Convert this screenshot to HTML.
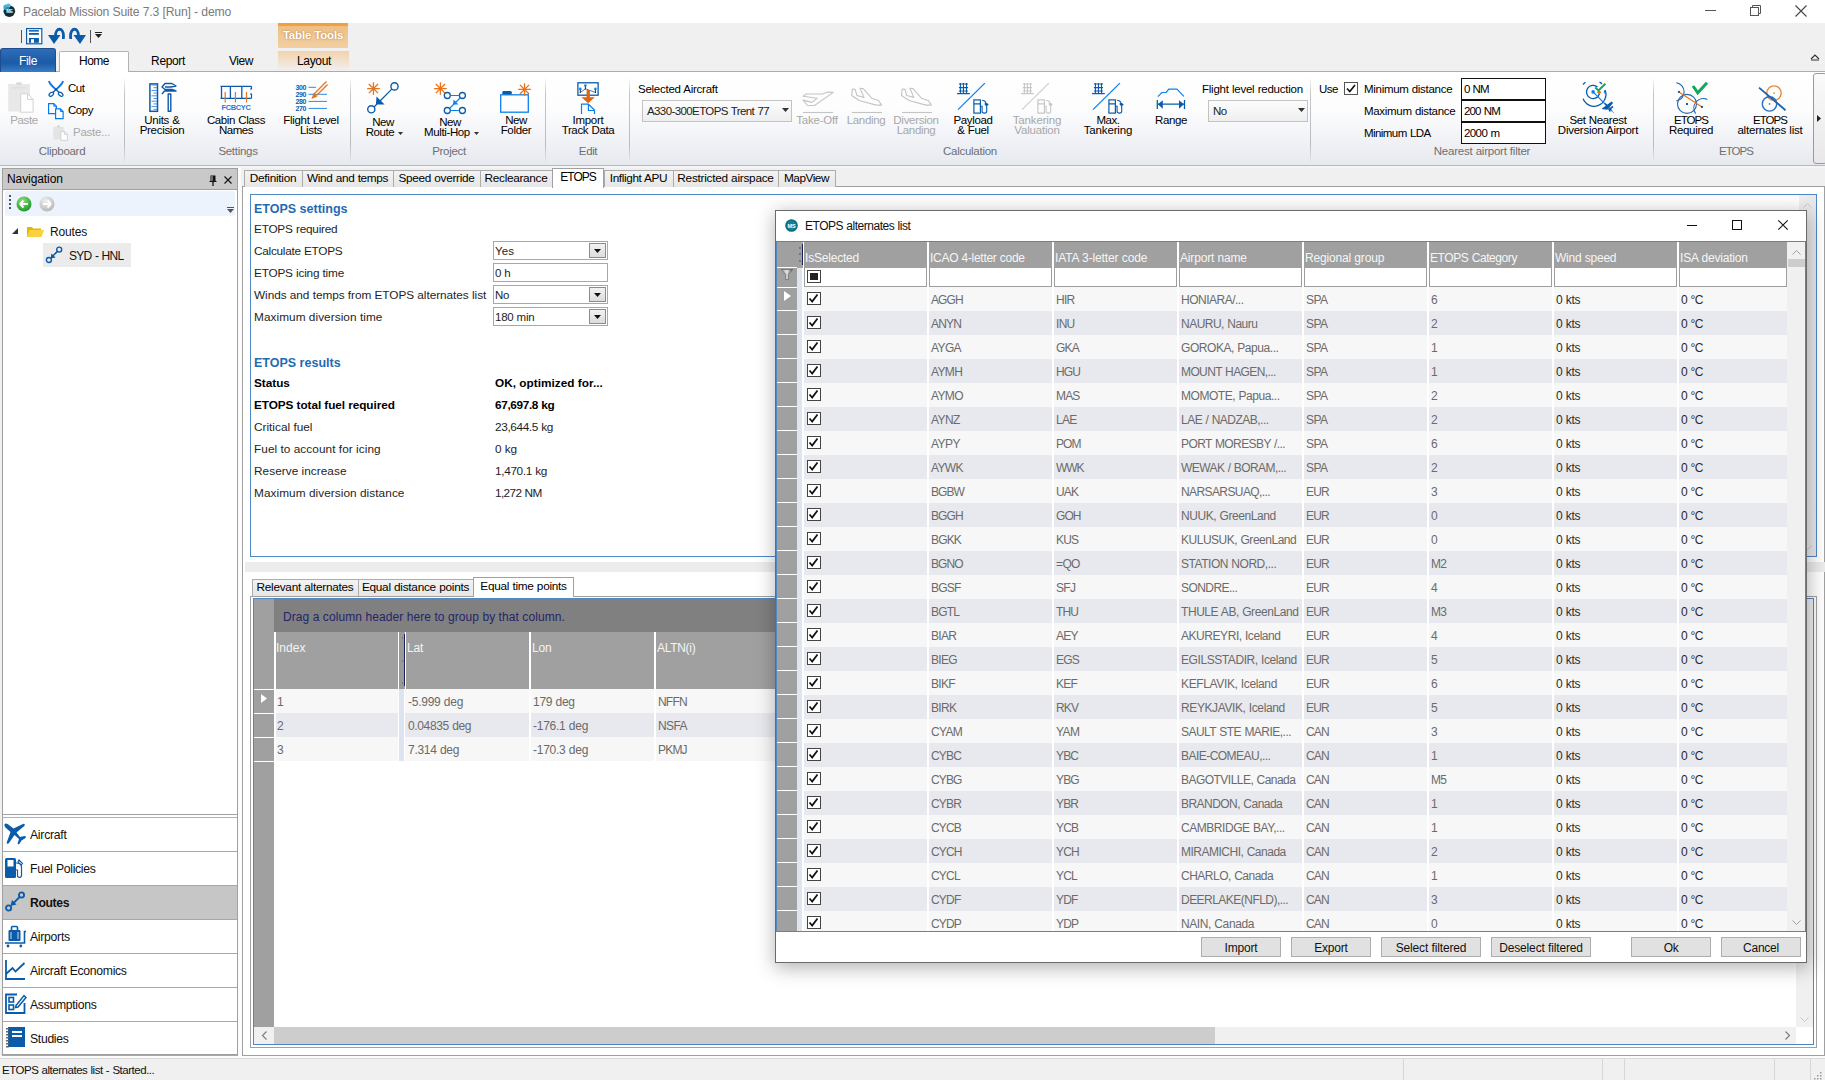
<!DOCTYPE html><html><head><meta charset="utf-8"><style>
*{margin:0;padding:0;box-sizing:border-box}
html,body{width:1825px;height:1080px;overflow:hidden;background:#f0f0f0;font-family:"Liberation Sans",sans-serif;font-size:12px;color:#000;position:relative}
.t{position:absolute;white-space:nowrap}
svg{position:absolute;overflow:visible}
</style></head><body><div style="position:absolute;left:0px;top:0px;width:1825px;height:23px;background:#fff"></div>
<svg style="left:2px;top:2px;" width="16" height="18" viewBox="0 0 16 18"><circle cx="7.3" cy="9.2" r="5.8" fill="#0f2f38"/><circle cx="4" cy="5.2" r="2.6" fill="#3fb0cc"/><circle cx="6.5" cy="3.6" r="2.2" fill="#4cc0d8"/><circle cx="5.5" cy="6.5" r="1.8" fill="#2a8fa8"/><text x="7.6" y="11.3" font-size="4.5" fill="#fff" text-anchor="middle" font-family="Liberation Sans" font-weight="bold">ME</text></svg>
<div class="t" style="left:23px;top:4.00px;font-size:12.2px;line-height:17px;color:#7a7a7a;letter-spacing:-0.186px;word-spacing:0.186px;">Pacelab Mission Suite 7.3 [Run] - demo</div>
<div style="position:absolute;left:1705px;top:10px;width:11px;height:1px;background:#555"></div>
<svg style="left:1750px;top:5px;" width="12" height="12" viewBox="0 0 12 12"><rect x="0.5" y="2.5" width="8" height="8" fill="none" stroke="#555"/><path d="M2.5 2.5V0.5H10.5V8.5H8.5" fill="none" stroke="#555"/></svg>
<svg style="left:1795px;top:5px;" width="12" height="12" viewBox="0 0 12 12"><path d="M0.5 0.5L11.5 11.5M11.5 0.5L0.5 11.5" stroke="#444" stroke-width="1.1"/></svg>
<div style="position:absolute;left:21px;top:30px;width:1px;height:13px;background:#555"></div>
<svg style="left:26px;top:28px;" width="17" height="17" viewBox="0 0 17 17"><rect x="0.6" y="0.6" width="15.2" height="15.2" fill="#fff" stroke="#0a5cab" stroke-width="1.2"/><rect x="2.9" y="2.1" width="10" height="1.5" fill="#0a5cab"/><rect x="2.9" y="5" width="10" height="1.8" fill="#0a5cab"/><rect x="2.9" y="10" width="10" height="4.8" fill="#0a5cab"/><rect x="5" y="11.2" width="3" height="3.6" fill="#fff"/></svg>
<svg style="left:48px;top:28px;" width="17" height="17" viewBox="0 0 17 17"><path d="M7.5 8 C7.5 -1, 15.5 -1, 15.5 8 L15.3 11" fill="none" stroke="#0a5cab" stroke-width="2.8"/><path d="M0 7 L12.5 7 L6 16 Z" fill="#0a5cab"/></svg>
<svg style="left:69px;top:28px;" width="17" height="17" viewBox="0 0 17 17"><path d="M9.5 8 C9.5 -1, 1.5 -1, 1.5 8 L1.7 11" fill="none" stroke="#0a5cab" stroke-width="2.8"/><path d="M17 7 L4.5 7 L11 16 Z" fill="#0a5cab"/></svg>
<div style="position:absolute;left:90px;top:30px;width:1px;height:13px;background:#555"></div>
<div style="position:absolute;left:95px;top:32px;width:7px;height:1px;background:#222"></div>
<svg style="left:95px;top:34px;" width="7" height="4" viewBox="0 0 7 4"><path d="M0 0H7L3.5 4Z" fill="#222"/></svg>
<div style="position:absolute;left:278px;top:23px;width:70px;height:25px;background:linear-gradient(#f4a03a 0,#f4a03a 3px,#eebf86 3px,#f2cfa2 100%)"></div>
<div class="t" style="left:278.0px;width:70px;text-align:center;top:27.00px;font-size:11.5px;line-height:16px;color:#fff;font-weight:bold;letter-spacing:-0.199px;word-spacing:0.199px;text-shadow:0 0 2px #b07030;">Table Tools</div>
<div style="position:absolute;left:0px;top:71px;width:1825px;height:1px;background:#a9adb5"></div>
<div style="position:absolute;left:0px;top:48px;width:56px;height:24px;background:linear-gradient(#2f6db8,#1b5aa6 60%,#3b7cc5);border-radius:3px 3px 0 0;border:1px solid #1d4f8f;border-bottom:none"></div>
<div class="t" style="left:0.0px;width:56px;text-align:center;top:53.00px;font-size:12px;line-height:17px;color:#fff;letter-spacing:-0.358px;word-spacing:0.358px;">File</div>
<div style="position:absolute;left:59px;top:51px;width:70px;height:21px;background:#fff;border:1px solid #b0b3b8;border-bottom:none;border-radius:2px 2px 0 0"></div>
<div class="t" style="left:59.0px;width:70px;text-align:center;top:53.00px;font-size:12px;line-height:17px;color:#000;letter-spacing:-0.515px;word-spacing:0.515px;">Home</div>
<div class="t" style="left:133.0px;width:70px;text-align:center;top:53.00px;font-size:12px;line-height:17px;color:#000;letter-spacing:-0.370px;word-spacing:0.370px;">Report</div>
<div class="t" style="left:206.0px;width:70px;text-align:center;top:53.00px;font-size:12px;line-height:17px;color:#000;letter-spacing:-0.386px;word-spacing:0.386px;">View</div>
<div style="position:absolute;left:278px;top:51px;width:71px;height:20px;background:linear-gradient(#f3d2aa,#f0f0f0)"></div>
<div class="t" style="left:279.0px;width:70px;text-align:center;top:53.00px;font-size:12px;line-height:17px;color:#000;letter-spacing:-0.340px;word-spacing:0.340px;">Layout</div>
<svg style="left:1810px;top:53px;" width="10" height="7" viewBox="0 0 10 7"><path d="M1 6 L5 2 L9 6" fill="none" stroke="#333" stroke-width="1.2"/><path d="M1 7 H9" stroke="#333"/></svg>
<div style="position:absolute;left:0px;top:72px;width:1825px;height:93px;background:linear-gradient(#ffffff 0%,#fdfdfe 40%,#e6e9ef 100%)"></div>
<div style="position:absolute;left:0px;top:165px;width:1825px;height:1px;background:#b6b9bf"></div>
<div style="position:absolute;left:124px;top:77px;width:1px;height:85px;background:linear-gradient(rgba(200,203,208,0),#c2c5ca 20%,#b8bbc0 80%,rgba(200,203,208,0.2))"></div>
<div style="position:absolute;left:350px;top:77px;width:1px;height:85px;background:linear-gradient(rgba(200,203,208,0),#c2c5ca 20%,#b8bbc0 80%,rgba(200,203,208,0.2))"></div>
<div style="position:absolute;left:545px;top:77px;width:1px;height:85px;background:linear-gradient(rgba(200,203,208,0),#c2c5ca 20%,#b8bbc0 80%,rgba(200,203,208,0.2))"></div>
<div style="position:absolute;left:629px;top:77px;width:1px;height:85px;background:linear-gradient(rgba(200,203,208,0),#c2c5ca 20%,#b8bbc0 80%,rgba(200,203,208,0.2))"></div>
<div style="position:absolute;left:1310px;top:77px;width:1px;height:85px;background:linear-gradient(rgba(200,203,208,0),#c2c5ca 20%,#b8bbc0 80%,rgba(200,203,208,0.2))"></div>
<div style="position:absolute;left:1653px;top:77px;width:1px;height:85px;background:linear-gradient(rgba(200,203,208,0),#c2c5ca 20%,#b8bbc0 80%,rgba(200,203,208,0.2))"></div>
<div class="t" style="left:-38.0px;width:200px;text-align:center;top:143.00px;font-size:11.5px;line-height:16px;color:#6d6f73;letter-spacing:-0.302px;word-spacing:0.302px;">Clipboard</div>
<div class="t" style="left:138.0px;width:200px;text-align:center;top:143.00px;font-size:11.5px;line-height:16px;color:#6d6f73;letter-spacing:-0.294px;word-spacing:0.294px;">Settings</div>
<div class="t" style="left:349.0px;width:200px;text-align:center;top:143.00px;font-size:11.5px;line-height:16px;color:#6d6f73;letter-spacing:-0.303px;word-spacing:0.303px;">Project</div>
<div class="t" style="left:488.0px;width:200px;text-align:center;top:143.00px;font-size:11.5px;line-height:16px;color:#6d6f73;letter-spacing:-0.371px;word-spacing:0.371px;">Edit</div>
<div class="t" style="left:870.0px;width:200px;text-align:center;top:143.00px;font-size:11.5px;line-height:16px;color:#6d6f73;letter-spacing:-0.275px;word-spacing:0.275px;">Calculation</div>
<div class="t" style="left:1382.0px;width:200px;text-align:center;top:143.00px;font-size:11.5px;line-height:16px;color:#6d6f73;letter-spacing:-0.227px;word-spacing:0.227px;">Nearest airport filter</div>
<div class="t" style="left:1636.0px;width:200px;text-align:center;top:143.00px;font-size:11.5px;line-height:16px;color:#6d6f73;letter-spacing:-0.972px;word-spacing:0.972px;">ETOPS</div>
<div style="position:absolute;left:1813px;top:73px;width:14px;height:91px;background:linear-gradient(#fafafa,#e8e8e8);border:1px solid #9a9a9a;border-radius:3px"></div>
<svg style="left:1817px;top:115px;" width="4" height="7" viewBox="0 0 4 7"><path d="M0 0L4 3.5L0 7Z" fill="#222"/></svg>
<svg style="left:8px;top:82px;" width="28" height="32" viewBox="0 0 28 32"><rect x="0.2" y="2" width="21.8" height="27.6" fill="#e8e8e8"/><rect x="8.2" y="0.3" width="5.5" height="2.5" fill="#dadada"/><path d="M4 5.8H18" stroke="#dcdcdc" stroke-width="1.2"/><path d="M12.7 11.8 H19.5 L25.1 17.4 V30.2 H12.7Z" fill="#fff" stroke="#d2d2d2" stroke-width="1"/><path d="M19.5 11.8 V17.4 H25.1" fill="none" stroke="#d2d2d2" stroke-width="1"/></svg>
<div class="t" style="left:-6.0px;width:60px;text-align:center;top:112.00px;font-size:11.5px;line-height:16px;color:#a8a8a8;letter-spacing:-0.373px;word-spacing:0.373px;">Paste</div>
<svg style="left:48px;top:80px;" width="17" height="17" viewBox="0 0 17 17"><path d="M1 1 C1.5 4 4 6 8 9.5 M15 1 C14.5 4 12 6 8 9.5" fill="none" stroke="#0a78e6" stroke-width="1.8"/><path d="M8 9.5 L5 12.5 M8 9.5 L11 12.5" stroke="#0a5cab" stroke-width="1.3"/><ellipse cx="3.3" cy="14.3" rx="2.6" ry="1.6" transform="rotate(-40 3.3 14.3)" fill="none" stroke="#0a5cab" stroke-width="1.2"/><ellipse cx="12.7" cy="14.3" rx="2.6" ry="1.6" transform="rotate(40 12.7 14.3)" fill="none" stroke="#0a5cab" stroke-width="1.2"/><circle cx="8" cy="9.3" r="1.2" fill="#0a5cab"/></svg>
<div class="t" style="left:68px;top:80.00px;font-size:11.5px;line-height:16px;color:#000;letter-spacing:-0.488px;word-spacing:0.488px;">Cut</div>
<svg style="left:48px;top:103px;" width="17" height="17" viewBox="0 0 17 17"><path d="M0.6 0.6H5.8L8.4 3.2V10.6H0.6Z" fill="#fff" stroke="#0a78e6" stroke-width="1.2"/><path d="M5.8 0.6V3.2H8.4" fill="none" stroke="#0a78e6" stroke-width="1"/><path d="M7.6 5.8H12.4L15.1 8.5V15.6H7.6Z" fill="#fff" stroke="#0a78e6" stroke-width="1.2"/><path d="M12.4 5.8V8.5H15.1" fill="none" stroke="#0a78e6" stroke-width="1"/></svg>
<div class="t" style="left:68px;top:102.00px;font-size:11.5px;line-height:16px;color:#000;letter-spacing:-0.455px;word-spacing:0.455px;">Copy</div>
<svg style="left:53px;top:125px;" width="16" height="16" viewBox="0 0 16 16"><rect x="0.2" y="2" width="10.6" height="12.5" fill="#e4e4e4"/><rect x="4" y="0.4" width="3" height="2" fill="#d8d8d8"/><path d="M7.8 6.4 H11.4 L14.4 9.4 V15.4 H7.8Z" fill="#fff" stroke="#d0d0d0" stroke-width="1"/><path d="M11.4 6.4 V9.4 H14.4" fill="none" stroke="#d0d0d0" stroke-width="0.9"/></svg>
<div class="t" style="left:73px;top:124.00px;font-size:11.5px;line-height:16px;color:#a8a8a8;letter-spacing:-0.233px;word-spacing:0.233px;">Paste...</div>
<svg style="left:145px;top:78px;" width="36" height="36" viewBox="0 0 36 36"><rect x="4.9" y="5.9" width="7.6" height="27.4" fill="none" stroke="#0f5aa8" stroke-width="1.5"/><path d="M6.5 7.0 H12" stroke="#2f8ae0" stroke-width="0.9"/><path d="M8.5 9.7 H12" stroke="#2f8ae0" stroke-width="0.9"/><path d="M6.5 12.4 H12" stroke="#2f8ae0" stroke-width="0.9"/><path d="M8.5 15.1 H12" stroke="#2f8ae0" stroke-width="0.9"/><path d="M6.5 17.8 H12" stroke="#2f8ae0" stroke-width="0.9"/><path d="M8.5 20.5 H12" stroke="#2f8ae0" stroke-width="0.9"/><path d="M6.5 23.2 H12" stroke="#2f8ae0" stroke-width="0.9"/><path d="M8.5 25.9 H12" stroke="#2f8ae0" stroke-width="0.9"/><path d="M6.5 28.6 H12" stroke="#2f8ae0" stroke-width="0.9"/><path d="M8.5 31.3 H12" stroke="#2f8ae0" stroke-width="0.9"/><path d="M23.2 33.3 V16 H25.8 V33.3Z M17 16 L19.5 13 L31 13 L27 11.5 L20 11.5 L17 9 L20 5.5 L27 5.5 L31 8 L26 9 L20 9" fill="none" stroke="#0f5aa8" stroke-width="1.4" stroke-linejoin="round"/></svg>
<div class="t" style="left:122.0px;width:80px;text-align:center;top:112.00px;font-size:11.5px;line-height:16px;color:#000;letter-spacing:-0.299px;word-spacing:0.299px;">Units &amp;</div>
<div class="t" style="left:122.0px;width:80px;text-align:center;top:122.00px;font-size:11.5px;line-height:16px;color:#000;letter-spacing:-0.287px;word-spacing:0.287px;">Precision</div>
<svg style="left:218px;top:84px;" width="36" height="28" viewBox="0 0 36 28"><path d="M2.5 2.3 H33.5 M2.5 14.3 H33.5 M3.5 2.3 V14.3 M12.4 2.3 V14.3 M23.8 2.3 V14.3" fill="none" stroke="#0f5aa8" stroke-width="1.3"/><path d="M33.5 2.3 V5 H32 M33.5 14.3 V10 H32" fill="none" stroke="#0f5aa8" stroke-width="1.2"/><path d="M7.2 8 V18.5 M17.4 8 V18.5 M28.5 8 V18.5" stroke="#e8731a" stroke-width="1.2"/><text x="18" y="25.8" font-size="7.4" fill="#1e78d8" text-anchor="middle" font-family="Liberation Sans" font-weight="bold" letter-spacing="-0.3">FCBCYC</text></svg>
<div class="t" style="left:196.0px;width:80px;text-align:center;top:112.00px;font-size:11.5px;line-height:16px;color:#000;letter-spacing:-0.385px;word-spacing:0.385px;">Cabin Class</div>
<div class="t" style="left:196.0px;width:80px;text-align:center;top:122.00px;font-size:11.5px;line-height:16px;color:#000;letter-spacing:-0.441px;word-spacing:0.441px;">Names</div>
<svg style="left:294px;top:80px;" width="36" height="34" viewBox="0 0 36 34"><g font-family="Liberation Sans" font-weight="bold" font-size="7" fill="#0f5aa8" letter-spacing="-0.4"><text x="1.5" y="10">300</text><text x="1.5" y="17">290</text><text x="1.5" y="24">280</text><text x="1.5" y="31">270</text></g><path d="M14.5 7.3H22M14.5 14.3H33M14.5 21.4H33M14.5 28.4H33" stroke="#2f8ae0" stroke-width="1"/><path d="M20 14 L32.5 1.5 M22.5 15.5 L33.5 4.5" stroke="#e8731a" stroke-width="1.3" fill="none"/><path d="M17.5 19 L19.5 13 L23.5 16.5Z" fill="#e8731a"/></svg>
<div class="t" style="left:271.0px;width:80px;text-align:center;top:112.00px;font-size:11.5px;line-height:16px;color:#000;letter-spacing:-0.312px;word-spacing:0.312px;">Flight Level</div>
<div class="t" style="left:271.0px;width:80px;text-align:center;top:122.00px;font-size:11.5px;line-height:16px;color:#000;letter-spacing:-0.304px;word-spacing:0.304px;">Lists</div>
<svg style="left:362px;top:78px;" width="110" height="40" viewBox="0 0 110 40"><g transform="translate(0,0)"><path d="M5.1499999999999995 10.55H17.75M11.45 4.250000000000001V16.85M6.85 5.950000000000001L16.049999999999997 15.15M16.049999999999997 5.950000000000001L6.85 15.15" stroke="#e8731a" stroke-width="1.3"/><circle cx="32.5" cy="8.4" r="3.6" fill="none" stroke="#0a5cab" stroke-width="1.4"/><circle cx="9.3" cy="31.3" r="3.6" fill="none" stroke="#0a5cab" stroke-width="1.4"/><path d="M29.8 11.1 L18 23 M15 26 L12 29" stroke="#0a5cab" stroke-width="1.3"/><path d="M14.5 18.4 L22.6 26.5 L13.9 26.5Z" fill="#0a5cab"/></g><path d="M72.10000000000001 10.55H84.7M78.4 4.250000000000001V16.85M73.80000000000001 5.950000000000001L83.0 15.15M83.0 5.950000000000001L73.80000000000001 15.15" stroke="#e8731a" stroke-width="1.3"/><circle cx="85.3" cy="17.5" r="3" fill="none" stroke="#0a5cab" stroke-width="1.3"/><circle cx="100.4" cy="17.5" r="3" fill="none" stroke="#0a5cab" stroke-width="1.3"/><circle cx="85.3" cy="32.5" r="3" fill="none" stroke="#0a5cab" stroke-width="1.3"/><circle cx="100.4" cy="32.5" r="3" fill="none" stroke="#0a5cab" stroke-width="1.3"/><path d="M88.3 17.5H97.4M88.3 32.5H97.4M98.3 19.8 L88 30" stroke="#0a80f0" stroke-width="1.2"/><path d="M91.6 21.4 L96.4 26.5 L91 26.5Z" fill="#0a80f0"/></svg>
<div class="t" style="left:343.0px;width:80px;text-align:center;top:114.00px;font-size:11.5px;line-height:16px;color:#000;letter-spacing:-0.556px;word-spacing:0.556px;">New</div>
<div class="t" style="left:340.0px;width:80px;text-align:center;top:124.00px;font-size:11.5px;line-height:16px;color:#000;letter-spacing:-0.395px;word-spacing:0.395px;">Route</div>
<svg style="left:398px;top:132px;" width="5" height="3" viewBox="0 0 5 3"><path d="M0 0H5L2.5 3Z" fill="#333"/></svg>
<div class="t" style="left:410.0px;width:80px;text-align:center;top:114.00px;font-size:11.5px;line-height:16px;color:#000;letter-spacing:-0.556px;word-spacing:0.556px;">New</div>
<div class="t" style="left:402.0px;width:90px;text-align:center;top:124.00px;font-size:11.5px;line-height:16px;color:#000;letter-spacing:-0.381px;word-spacing:0.381px;">Multi-Hop</div>
<svg style="left:474px;top:132px;" width="5" height="3" viewBox="0 0 5 3"><path d="M0 0H5L2.5 3Z" fill="#333"/></svg>
<svg style="left:495px;top:78px;" width="110" height="40" viewBox="0 0 110 40"><rect x="5.7" y="16.8" width="27.6" height="17.4" fill="none" stroke="#0a80f0" stroke-width="1.3"/><rect x="7.2" y="13" width="9.7" height="3.6" rx="1.5" fill="#0a5cab"/><path d="M23.2 11.45H35.8M29.5 5.1499999999999995V17.75M24.9 6.85L34.1 16.049999999999997M34.1 6.85L24.9 16.049999999999997" stroke="#e8731a" stroke-width="1.3"/><rect x="82.9" y="4.8" width="20.2" height="12.4" fill="none" stroke="#0a5cab" stroke-width="1.3"/><path d="M85.3 14.5 L90.4 10.8 L100.4 14.5" fill="none" stroke="#1e6fc8" stroke-width="0.9"/><path d="M85.3 11 V15 M90.4 8 V11.5 M100.4 11 V15" stroke="#111" stroke-width="0.9"/><circle cx="90.4" cy="7.5" r="1.3" fill="#0a80f0"/><circle cx="85.3" cy="10.9" r="1.3" fill="#0a80f0"/><circle cx="100.4" cy="10.9" r="1.3" fill="#0a80f0"/><path d="M91.6 12 H94.9 V19.3 H99.8 L93.2 25.3 L86.4 19.3 H91.6Z" fill="#e0650f"/><path d="M86.5 35.9 V26.2 H93.4 L99.5 32 V35.9 M93.4 26.2 V32.5 H99.5" fill="none" stroke="#0a80f0" stroke-width="1.2"/></svg>
<div class="t" style="left:476.0px;width:80px;text-align:center;top:112.00px;font-size:11.5px;line-height:16px;color:#000;letter-spacing:-0.556px;word-spacing:0.556px;">New</div>
<div class="t" style="left:476.0px;width:80px;text-align:center;top:122.00px;font-size:11.5px;line-height:16px;color:#000;letter-spacing:-0.323px;word-spacing:0.323px;">Folder</div>
<div class="t" style="left:548.0px;width:80px;text-align:center;top:112.00px;font-size:11.5px;line-height:16px;color:#000;letter-spacing:-0.265px;word-spacing:0.265px;">Import</div>
<div class="t" style="left:548.0px;width:80px;text-align:center;top:122.00px;font-size:11.5px;line-height:16px;color:#000;letter-spacing:-0.342px;word-spacing:0.342px;">Track Data</div>
<div class="t" style="left:638px;top:81.00px;font-size:11.5px;line-height:16px;color:#000;letter-spacing:-0.250px;word-spacing:0.250px;">Selected Aircraft</div>
<div style="position:absolute;left:642px;top:100px;width:150px;height:22px;background:linear-gradient(#fdfdfd,#eeeeee);border:1px solid #c3c3c3"></div>
<div class="t" style="left:647px;top:103.00px;font-size:11.5px;line-height:16px;color:#222;letter-spacing:-0.602px;word-spacing:0.602px;">A330-300ETOPS Trent 77</div>
<svg style="left:782px;top:108px;" width="7" height="4" viewBox="0 0 7 4"><path d="M0 0H7L3.5 4Z" fill="#333"/></svg>
<svg style="left:798px;top:84px;" width="140" height="32" viewBox="0 0 140 32"><g fill="none" stroke="#c4c4c4" stroke-width="1.1" stroke-linejoin="round"><path d="M5 16.1 L9.6 21.5 L16.5 21.5 L35.3 8.4 L29.9 8.1 L24.5 10 L8.4 10 L5 12.3 L19.2 14.2 L13.8 18.4 Z"/><path d="M5 28.5H35"/><path d="M53.7 11.5 L54.4 5 L57.1 5.4 L59 11.5 L66 13.4 L62.1 4.2 L65.2 4.6 L73.6 14.2 L80.5 16.5 L83.6 21.1 L78.2 21.1 L61.3 16.5 Z"/><path d="M54 28.5H84"/><path d="M103.5 11.5 L104.2 5 L106.9 5.4 L108.8 11.5 L115.8 13.4 L111.9 4.2 L115 4.6 L123.4 14.2 L130.3 16.5 L133.4 21.1 L128 21.1 L111.1 16.5 Z"/><path d="M104 28.5H134"/></g></svg>
<div class="t" style="left:777.0px;width:80px;text-align:center;top:112.00px;font-size:11.5px;line-height:16px;color:#a8a8a8;letter-spacing:-0.199px;word-spacing:0.199px;">Take-Off</div>
<div class="t" style="left:826.0px;width:80px;text-align:center;top:112.00px;font-size:11.5px;line-height:16px;color:#a8a8a8;letter-spacing:-0.316px;word-spacing:0.316px;">Landing</div>
<div class="t" style="left:876.0px;width:80px;text-align:center;top:112.00px;font-size:11.5px;line-height:16px;color:#a8a8a8;letter-spacing:-0.296px;word-spacing:0.296px;">Diversion</div>
<div class="t" style="left:876.0px;width:80px;text-align:center;top:122.00px;font-size:11.5px;line-height:16px;color:#a8a8a8;letter-spacing:-0.316px;word-spacing:0.316px;">Landing</div>
<svg style="left:952px;top:78px;" width="40" height="40" viewBox="0 0 40 40"><path d="M8.4 5.1V15.4M11.45 5.1V15.4M14.5 5.1V15.4M6.9 6H16M6.9 9.6H16M6.9 13H16" stroke="#0a5cab" stroke-width="1.1"/><path d="M5.1 15.6H17.8" stroke="#0a5cab" stroke-width="1.3"/><path d="M6 31.6L32.9 5.1" stroke="#0a80f0" stroke-width="1.3"/><rect x="21.9" y="21.9" width="6.5" height="13.2" fill="none" stroke="#0a5cab" stroke-width="1.2"/><path d="M21.9 25.9H28.4M28.4 28.3H30.1V33.5C30.1 35.6 34.7 35.6 34.7 33.5V26.5M30.1 22.3C32 22.3 33 23 34 24.3" fill="none" stroke="#0a5cab" stroke-width="1.1"/><path d="M33 24 L36.8 26.2 L34.5 28.4 L32.6 26.5Z" fill="#0a5cab"/></svg>
<div class="t" style="left:933.0px;width:80px;text-align:center;top:112.00px;font-size:11.5px;line-height:16px;color:#000;letter-spacing:-0.336px;word-spacing:0.336px;">Payload</div>
<div class="t" style="left:933.0px;width:80px;text-align:center;top:122.00px;font-size:11.5px;line-height:16px;color:#000;letter-spacing:-0.305px;word-spacing:0.305px;">&amp; Fuel</div>
<svg style="left:1016px;top:78px;" width="40" height="40" viewBox="0 0 40 40"><path d="M8.4 5.1V15.4M11.45 5.1V15.4M14.5 5.1V15.4M6.9 6H16M6.9 9.6H16M6.9 13H16" stroke="#c8c8c8" stroke-width="1.1"/><path d="M5.1 15.6H17.8" stroke="#c8c8c8" stroke-width="1.3"/><path d="M6 31.6L32.9 5.1" stroke="#d0d0d0" stroke-width="1.3"/><rect x="21.9" y="21.9" width="6.5" height="13.2" fill="none" stroke="#c8c8c8" stroke-width="1.2"/><path d="M21.9 25.9H28.4M28.4 28.3H30.1V33.5C30.1 35.6 34.7 35.6 34.7 33.5V26.5M30.1 22.3C32 22.3 33 23 34 24.3" fill="none" stroke="#c8c8c8" stroke-width="1.1"/><path d="M33 24 L36.8 26.2 L34.5 28.4 L32.6 26.5Z" fill="#c8c8c8"/></svg>
<div class="t" style="left:997.0px;width:80px;text-align:center;top:112.00px;font-size:11.5px;line-height:16px;color:#a8a8a8;letter-spacing:-0.156px;word-spacing:0.156px;">Tankering</div>
<div class="t" style="left:997.0px;width:80px;text-align:center;top:122.00px;font-size:11.5px;line-height:16px;color:#a8a8a8;letter-spacing:-0.195px;word-spacing:0.195px;">Valuation</div>
<svg style="left:1087px;top:78px;" width="40" height="40" viewBox="0 0 40 40"><path d="M8.4 5.1V15.4M11.45 5.1V15.4M14.5 5.1V15.4M6.9 6H16M6.9 9.6H16M6.9 13H16" stroke="#0a5cab" stroke-width="1.1"/><path d="M5.1 15.6H17.8" stroke="#0a5cab" stroke-width="1.3"/><path d="M6 31.6L32.9 5.1" stroke="#0a80f0" stroke-width="1.3"/><rect x="21.9" y="21.9" width="6.5" height="13.2" fill="none" stroke="#0a5cab" stroke-width="1.2"/><path d="M21.9 25.9H28.4M28.4 28.3H30.1V33.5C30.1 35.6 34.7 35.6 34.7 33.5V26.5M30.1 22.3C32 22.3 33 23 34 24.3" fill="none" stroke="#0a5cab" stroke-width="1.1"/><path d="M33 24 L36.8 26.2 L34.5 28.4 L32.6 26.5Z" fill="#0a5cab"/></svg>
<div class="t" style="left:1068.0px;width:80px;text-align:center;top:112.00px;font-size:11.5px;line-height:16px;color:#000;letter-spacing:-0.433px;word-spacing:0.433px;">Max.</div>
<div class="t" style="left:1068.0px;width:80px;text-align:center;top:122.00px;font-size:11.5px;line-height:16px;color:#000;letter-spacing:-0.156px;word-spacing:0.156px;">Tankering</div>
<svg style="left:1085px;top:78px;" width="110" height="40" viewBox="0 0 110 40"><path d="M72.9 18.7 L76.9 14.5 H81.1 L83.8 11.2 H91.9 L98.9 18.4" fill="none" stroke="#0a80f0" stroke-width="1.2"/><path d="M72.3 22V31M99.5 22V31M73 26.2H99" stroke="#0a5cab" stroke-width="1.3"/><path d="M72.9 26.2 L77.8 22.3 V30.7Z M98.9 26.2 L94 22.3 V30.7Z" fill="#0a5cab"/></svg>
<div class="t" style="left:1131.0px;width:80px;text-align:center;top:112.00px;font-size:11.5px;line-height:16px;color:#000;letter-spacing:-0.421px;word-spacing:0.421px;">Range</div>
<div class="t" style="left:1202px;top:81.00px;font-size:11.5px;line-height:16px;color:#000;letter-spacing:-0.230px;word-spacing:0.230px;">Flight level reduction</div>
<div style="position:absolute;left:1208px;top:100px;width:100px;height:22px;background:linear-gradient(#fdfdfd,#eeeeee);border:1px solid #c3c3c3"></div>
<div class="t" style="left:1213px;top:103.00px;font-size:11.5px;line-height:16px;color:#222;letter-spacing:-0.668px;word-spacing:0.668px;">No</div>
<svg style="left:1298px;top:108px;" width="7" height="4" viewBox="0 0 7 4"><path d="M0 0H7L3.5 4Z" fill="#333"/></svg>
<div class="t" style="left:1319px;top:81.00px;font-size:11.5px;line-height:16px;color:#000;letter-spacing:-0.522px;word-spacing:0.522px;">Use</div>
<div style="position:absolute;left:1344px;top:82px;width:14px;height:13px;background:#fff;border:1px solid #555"></div>
<svg style="left:1346px;top:84px;" width="10" height="9" viewBox="0 0 10 9"><path d="M1 4.5 L3.8 7.5 L9 1" fill="none" stroke="#111" stroke-width="1.6"/></svg>
<div class="t" style="left:1364px;top:81.00px;font-size:11.5px;line-height:16px;color:#000;letter-spacing:-0.296px;word-spacing:0.296px;">Minimum distance</div>
<div class="t" style="left:1364px;top:103.00px;font-size:11.5px;line-height:16px;color:#000;letter-spacing:-0.305px;word-spacing:0.305px;">Maximum distance</div>
<div class="t" style="left:1364px;top:125.00px;font-size:11.5px;line-height:16px;color:#000;letter-spacing:-0.564px;word-spacing:0.564px;">Minimum LDA</div>
<div style="position:absolute;left:1461px;top:78px;width:85px;height:22px;background:#fff;border:1.5px solid #111"></div>
<div class="t" style="left:1464px;top:81.00px;font-size:11.5px;line-height:16px;color:#000;letter-spacing:-0.988px;word-spacing:0.988px;">0 NM</div>
<div style="position:absolute;left:1461px;top:100px;width:85px;height:22px;background:#fff;border:1.5px solid #111"></div>
<div class="t" style="left:1464px;top:103.00px;font-size:11.5px;line-height:16px;color:#000;letter-spacing:-0.849px;word-spacing:0.849px;">200 NM</div>
<div style="position:absolute;left:1461px;top:122px;width:85px;height:22px;background:#fff;border:1.5px solid #111"></div>
<div class="t" style="left:1464px;top:125.00px;font-size:11.5px;line-height:16px;color:#000;letter-spacing:-0.588px;word-spacing:0.588px;">2000 m</div>
<svg style="left:1575px;top:78px;" width="44" height="40" viewBox="0 0 44 40"><g fill="none" stroke="#0a5cab" stroke-width="1.3"><path d="M22.5 9 A6.6 6.6 0 1 0 24.5 15.5"/><path d="M8.1 20.8 A10.5 10.5 0 0 0 30.1 12"/><path d="M8.1 6.5 A10.5 10.5 0 0 1 10.5 4.2 M24.5 4.2 A10.5 10.5 0 0 1 27 6"/></g><path d="M18.1 13.9 L37 33" stroke="#0a80f0" stroke-width="1.1"/><path d="M37 33 L39.5 35.5" stroke="#0a80f0" stroke-width="1" stroke-dasharray="1 1"/><circle cx="18.1" cy="13.9" r="1.8" fill="#0a80f0"/><circle cx="24.1" cy="14.2" r="1.8" fill="#e8731a"/><path d="M29.8 12 L31 13.9 L29.8 15.8 L28.6 13.9Z" fill="#0a80f0"/><path d="M20.2 9.6 L23.5 12.4 L30.4 5.7" fill="none" stroke="#10a85a" stroke-width="2"/><path d="M28.5 30.5 L36.5 24.5 L37 25 L32 31 Z M30 25.5 L34 30 M33.5 31.8 L38 28.5 M34.5 33.5 L36 30" stroke="#0a5cab" stroke-width="1.6" fill="#0a5cab"/></svg>
<div class="t" style="left:1538.0px;width:120px;text-align:center;top:112.00px;font-size:11.5px;line-height:16px;color:#000;letter-spacing:-0.374px;word-spacing:0.374px;">Set Nearest</div>
<div class="t" style="left:1538.0px;width:120px;text-align:center;top:122.00px;font-size:11.5px;line-height:16px;color:#000;letter-spacing:-0.255px;word-spacing:0.255px;">Diversion Airport</div>
<svg style="left:1670px;top:78px;" width="44" height="40" viewBox="0 0 44 40"><g fill="none" stroke="#1e64ae" stroke-width="1.1"><path d="M6.3 4.8 A9.2 9.2 0 0 1 6.3 23"/><circle cx="17" cy="25.9" r="9.5"/><path d="M25.6 35.6 A9.5 9.5 0 0 1 37.4 21.5"/></g><path d="M8.9 13.9 L32 28.9" stroke="#e8731a" stroke-width="1.2"/><rect x="7.9" y="12.9" width="2" height="2" fill="#1e5aa0"/><rect x="31" y="27.9" width="2" height="2" fill="#1e5aa0"/><rect x="16" y="25" width="2" height="2" fill="#1e5aa0"/><path d="M23 8 L27.8 14.8 L37 4.8" fill="none" stroke="#10a85a" stroke-width="3"/></svg>
<div class="t" style="left:1646.0px;width:90px;text-align:center;top:112.00px;font-size:11.5px;line-height:16px;color:#000;letter-spacing:-0.972px;word-spacing:0.972px;">ETOPS</div>
<div class="t" style="left:1646.0px;width:90px;text-align:center;top:122.00px;font-size:11.5px;line-height:16px;color:#000;letter-spacing:-0.327px;word-spacing:0.327px;">Required</div>
<svg style="left:1750px;top:78px;" width="40" height="40" viewBox="0 0 40 40"><circle cx="24" cy="15.1" r="7.2" fill="none" stroke="#e8883a" stroke-width="1.4"/><circle cx="19.5" cy="25.9" r="7.2" fill="none" stroke="#2a6fc0" stroke-width="1.4"/><rect x="23.3" y="14.4" width="1.5" height="1.5" fill="#e8883a"/><rect x="18.8" y="25.2" width="1.5" height="1.5" fill="#2a6fc0"/><path d="M9 9.6 L35.5 32.2" stroke="#1e64ae" stroke-width="1.8"/></svg>
<div class="t" style="left:1715.0px;width:110px;text-align:center;top:112.00px;font-size:11.5px;line-height:16px;color:#000;letter-spacing:-0.972px;word-spacing:0.972px;">ETOPS</div>
<div class="t" style="left:1715.0px;width:110px;text-align:center;top:122.00px;font-size:11.5px;line-height:16px;color:#000;letter-spacing:-0.184px;word-spacing:0.184px;">alternates list</div>
<div style="position:absolute;left:237px;top:166px;width:6px;height:892px;background:#fcfcfc"></div>
<div style="position:absolute;left:0px;top:1055px;width:1825px;height:3px;background:#fcfcfc"></div>
<div style="position:absolute;left:0px;top:166px;width:1825px;height:2px;background:#f4f4f4"></div>
<div style="position:absolute;left:2px;top:168px;width:236px;height:888px;background:#fff;border:1px solid #a0a0a0"></div>
<div style="position:absolute;left:3px;top:169px;width:234px;height:20px;background:#c9c9c9"></div>
<div style="position:absolute;left:3px;top:189px;width:234px;height:1px;background:#a0a0a0"></div>
<div class="t" style="left:7px;top:171.00px;font-size:12px;line-height:17px;color:#000;letter-spacing:-0.087px;word-spacing:0.087px;">Navigation</div>
<svg style="left:209px;top:175px;" width="8" height="11" viewBox="0 0 8 11"><path d="M1.5 0.5H6.5V6H7.5V7H0.5V6H1.5Z" fill="#111"/><rect x="2.5" y="1" width="1" height="5" fill="#c9c9c9"/><path d="M4 7V11" stroke="#111" stroke-width="1.3"/></svg>
<svg style="left:224px;top:176px;" width="8" height="8" viewBox="0 0 8 8"><path d="M0.5 0.5L7.5 7.5M7.5 0.5L0.5 7.5" stroke="#111" stroke-width="1.1"/></svg>
<div style="position:absolute;left:5px;top:191px;width:230px;height:25px;background:#ecf3fc;border-radius:3px"></div>
<div style="position:absolute;left:9px;top:195px;width:2px;height:2px;background:#555"></div>
<div style="position:absolute;left:9px;top:199px;width:2px;height:2px;background:#555"></div>
<div style="position:absolute;left:9px;top:203px;width:2px;height:2px;background:#555"></div>
<div style="position:absolute;left:9px;top:207px;width:2px;height:2px;background:#555"></div>
<svg style="left:16px;top:196px;" width="16" height="16" viewBox="0 0 16 16"><defs><radialGradient id="gg" cx="0.4" cy="0.3" r="0.7"><stop offset="0" stop-color="#8fe07a"/><stop offset="1" stop-color="#1f9a2a"/></radialGradient></defs><circle cx="8" cy="8" r="7.5" fill="url(#gg)"/><path d="M4 8H12M4 8L7.5 4.5M4 8L7.5 11.5" stroke="#fff" stroke-width="2" fill="none"/></svg>
<svg style="left:39px;top:196px;" width="16" height="16" viewBox="0 0 16 16"><defs><radialGradient id="gr" cx="0.4" cy="0.3" r="0.7"><stop offset="0" stop-color="#f0f0f0"/><stop offset="1" stop-color="#b9b9b9"/></radialGradient></defs><circle cx="8" cy="8" r="7.5" fill="url(#gr)"/><path d="M4 8H12M12 8L8.5 4.5M12 8L8.5 11.5" stroke="#fff" stroke-width="2" fill="none"/></svg>
<div style="position:absolute;left:227px;top:207px;width:7px;height:1px;background:#555"></div>
<svg style="left:227px;top:209px;" width="7" height="4" viewBox="0 0 7 4"><path d="M0 0H7L3.5 4Z" fill="#555"/></svg>
<svg style="left:12px;top:228px;" width="6" height="6" viewBox="0 0 6 6"><path d="M6 0V6H0Z" fill="#333"/></svg>
<svg style="left:26px;top:225px;" width="18" height="13" viewBox="0 0 18 13"><path d="M1 2H6L7 3.5H15V12H1Z" fill="#e6b800"/><path d="M1 12L3.5 5H18L15.5 12Z" fill="#f7d23e"/></svg>
<div class="t" style="left:50px;top:224.00px;font-size:12px;line-height:17px;color:#111;letter-spacing:-0.144px;word-spacing:0.144px;">Routes</div>
<div style="position:absolute;left:43px;top:243px;width:88px;height:24px;background:#ebebeb"></div>
<svg style="left:46px;top:246px;" width="17" height="18" viewBox="0 0 17 18"><circle cx="13.2" cy="3.6" r="2.5" fill="none" stroke="#0a5cab" stroke-width="1.4"/><circle cx="2.9" cy="14" r="2.5" fill="none" stroke="#0a5cab" stroke-width="1.4"/><path d="M11.4 5.4 L6 10.8" stroke="#0a5cab" stroke-width="1.5"/><path d="M4.6 12.4 L5.4 7.4 L9.6 11.6Z" fill="#0a5cab"/></svg>
<div class="t" style="left:69px;top:248.00px;font-size:12px;line-height:17px;color:#111;letter-spacing:-0.695px;word-spacing:0.695px;">SYD - HNL</div>
<div style="position:absolute;left:3px;top:814px;width:234px;height:1px;background:#a0a0a0"></div>
<div style="position:absolute;left:3px;top:817px;width:234px;height:1px;background:#b0b0b0"></div>
<div style="position:absolute;left:3px;top:851px;width:234px;height:1px;background:#a8a8a8"></div>
<div class="t" style="left:30px;top:827.00px;font-size:12.2px;line-height:17px;color:#111;letter-spacing:-0.254px;word-spacing:0.254px;">Aircraft</div>
<div style="position:absolute;left:3px;top:885px;width:234px;height:1px;background:#a8a8a8"></div>
<div class="t" style="left:30px;top:861.00px;font-size:12.2px;line-height:17px;color:#111;letter-spacing:-0.297px;word-spacing:0.297px;">Fuel Policies</div>
<div style="position:absolute;left:3px;top:886px;width:234px;height:33px;background:#c6c6c6"></div>
<div style="position:absolute;left:3px;top:919px;width:234px;height:1px;background:#a8a8a8"></div>
<div class="t" style="left:30px;top:895.00px;font-size:12.2px;line-height:17px;color:#111;font-weight:bold;letter-spacing:-0.364px;word-spacing:0.364px;">Routes</div>
<div style="position:absolute;left:3px;top:953px;width:234px;height:1px;background:#a8a8a8"></div>
<div class="t" style="left:30px;top:929.00px;font-size:12.2px;line-height:17px;color:#111;letter-spacing:-0.271px;word-spacing:0.271px;">Airports</div>
<div style="position:absolute;left:3px;top:987px;width:234px;height:1px;background:#a8a8a8"></div>
<div class="t" style="left:30px;top:963.00px;font-size:12.2px;line-height:17px;color:#111;letter-spacing:-0.289px;word-spacing:0.289px;">Aircraft Economics</div>
<div style="position:absolute;left:3px;top:1021px;width:234px;height:1px;background:#a8a8a8"></div>
<div class="t" style="left:30px;top:997.00px;font-size:12.2px;line-height:17px;color:#111;letter-spacing:-0.298px;word-spacing:0.298px;">Assumptions</div>
<div style="position:absolute;left:3px;top:1055px;width:234px;height:1px;background:#a8a8a8"></div>
<div class="t" style="left:30px;top:1031.00px;font-size:12.2px;line-height:17px;color:#111;letter-spacing:-0.302px;word-spacing:0.302px;">Studies</div>
<div style="position:absolute;left:3px;top:1054px;width:234px;height:1px;background:#a0a0a0"></div>
<svg style="left:4px;top:823px;" width="22" height="22" viewBox="0 0 22 22"><path d="M0.5 1.5 C1 0 2.5 0.3 4 1.2 L9.5 5.5 L19 1 C20.5 0.3 21.5 1.8 20.3 3 L12.5 9.5 L16 14 L20.5 13 C22 13 22.3 14.5 21.2 15.3 L17.5 17.5 L15.5 20.8 C14.5 21.8 13.3 21.2 13.8 20 L15 16 L10.5 12 L5 20 C4 21.3 2.3 20.7 2.8 19.2 L6.5 9 L2 5 C0.8 3.8 0.2 2.6 0.5 1.5Z" fill="#0a5cab"/></svg>
<svg style="left:5px;top:857px;" width="19" height="22" viewBox="0 0 19 22"><rect x="0" y="1" width="11" height="20" rx="1.5" fill="#0a5cab"/><rect x="2.5" y="3" width="6" height="6.5" fill="#fff"/><path d="M11 6 C15 6 16.5 7 16.5 10 V18.5 C16.5 21 12.5 21 12.5 18.5 V13 H11" fill="none" stroke="#0a5cab" stroke-width="1.2"/><path d="M14 3 L17.5 6.5 L16 8 L13 5Z" fill="none" stroke="#0a5cab" stroke-width="1.1"/></svg>
<svg style="left:5px;top:891px;" width="20" height="20" viewBox="0 0 20 20"><circle cx="16.5" cy="4" r="2.6" fill="none" stroke="#0a5cab" stroke-width="1.8"/><circle cx="3.6" cy="17" r="2.6" fill="none" stroke="#0a5cab" stroke-width="1.8"/><path d="M14.6 6 L7 13.6" stroke="#0a5cab" stroke-width="1.8"/><path d="M5.5 15 L7 9 L11.5 13.5Z" fill="#0a5cab"/></svg>
<svg style="left:5px;top:925px;" width="22" height="22" viewBox="0 0 22 22"><rect x="3.5" y="5" width="12" height="11" rx="1" fill="#0a5cab"/><rect x="6.5" y="1.5" width="6" height="4.5" rx="1" fill="none" stroke="#0a5cab" stroke-width="1.6"/><path d="M6 7V14M13 7V14" stroke="#fff" stroke-width="0.8"/><path d="M0 18H19.5V6.5H21" fill="none" stroke="#0a5cab" stroke-width="1.6"/><circle cx="3" cy="21" r="1.4" fill="#0a5cab"/><circle cx="15.8" cy="21" r="1.4" fill="#0a5cab"/></svg>
<svg style="left:5px;top:960px;" width="21" height="20" viewBox="0 0 21 20"><path d="M1 0V19H20" fill="none" stroke="#0a5cab" stroke-width="1.8"/><path d="M1 14 L7.5 8 L10.5 11.5 L19.5 3" fill="none" stroke="#0a5cab" stroke-width="1.8"/></svg>
<svg style="left:5px;top:993px;" width="21" height="21" viewBox="0 0 21 21"><path d="M12 1.5H1V20H19.5V10" fill="none" stroke="#0a5cab" stroke-width="1.8"/><rect x="4" y="4.5" width="4.5" height="4.5" fill="none" stroke="#0a5cab" stroke-width="1.6"/><rect x="4" y="12" width="4.5" height="4.5" fill="none" stroke="#0a5cab" stroke-width="1.6"/><path d="M11 12.5 L19 2.5 L21 4.5 L13 14 L10.5 14.5Z" fill="none" stroke="#0a5cab" stroke-width="1.5"/></svg>
<svg style="left:5px;top:1027px;" width="21" height="21" viewBox="0 0 21 21"><rect x="3" y="0" width="17" height="20" fill="#0a5cab"/><rect x="7" y="4" width="10" height="2" fill="#fff"/><rect x="7" y="8" width="10" height="2" fill="#fff"/><rect x="1" y="1" width="3" height="1.5" fill="#666"/><rect x="1" y="4" width="3" height="1.5" fill="#666"/><rect x="1" y="7" width="3" height="1.5" fill="#666"/><rect x="1" y="10" width="3" height="1.5" fill="#666"/><rect x="1" y="13" width="3" height="1.5" fill="#666"/><rect x="1" y="16" width="3" height="1.5" fill="#666"/><rect x="1" y="19" width="3" height="1.5" fill="#666"/></svg>
<div style="position:absolute;left:0px;top:1058px;width:1825px;height:1px;background:#d9d9d9"></div>
<div class="t" style="left:2px;top:1062.00px;font-size:11.5px;line-height:16px;color:#111;letter-spacing:-0.477px;word-spacing:0.477px;">ETOPS alternates list - Started...</div>
<div style="position:absolute;left:1403px;top:1059px;width:1px;height:21px;background:#d6d6d6"></div>
<div style="position:absolute;left:1602px;top:1059px;width:1px;height:21px;background:#d6d6d6"></div>
<div style="position:absolute;left:1624px;top:1059px;width:1px;height:21px;background:#d6d6d6"></div>
<div style="position:absolute;left:1774px;top:1059px;width:1px;height:21px;background:#d6d6d6"></div>
<div style="position:absolute;left:1810px;top:1059px;width:1px;height:21px;background:#d6d6d6"></div>
<svg style="left:1812px;top:1070px;" width="10" height="10" viewBox="0 0 10 10"><rect x="8" y="2" width="1.5" height="1.5" fill="#999"/><rect x="5" y="5" width="1.5" height="1.5" fill="#999"/><rect x="8" y="5" width="1.5" height="1.5" fill="#999"/><rect x="2" y="8" width="1.5" height="1.5" fill="#999"/><rect x="5" y="8" width="1.5" height="1.5" fill="#999"/><rect x="8" y="8" width="1.5" height="1.5" fill="#999"/></svg>
<div style="position:absolute;left:241px;top:168px;width:1584px;height:19px;background:#f0f0f0"></div>
<div style="position:absolute;left:242px;top:186px;width:1583px;height:870px;background:#fff;border:1px solid #a0a0a0"></div>
<div style="position:absolute;left:244px;top:170px;width:59px;height:17px;background:linear-gradient(#f3f3f3,#e6e6e6);border:1px solid #acacac;border-bottom:none"></div>
<div class="t" style="left:239.0px;width:68px;text-align:center;top:170.00px;font-size:11.8px;line-height:17px;color:#000;letter-spacing:-0.273px;word-spacing:0.273px;">Definition</div>
<div style="position:absolute;left:302px;top:170px;width:92px;height:17px;background:linear-gradient(#f3f3f3,#e6e6e6);border:1px solid #acacac;border-bottom:none"></div>
<div class="t" style="left:297.0px;width:101px;text-align:center;top:170.00px;font-size:11.8px;line-height:17px;color:#000;letter-spacing:-0.346px;word-spacing:0.346px;">Wind and temps</div>
<div style="position:absolute;left:393px;top:170px;width:88px;height:17px;background:linear-gradient(#f3f3f3,#e6e6e6);border:1px solid #acacac;border-bottom:none"></div>
<div class="t" style="left:388.0px;width:97px;text-align:center;top:170.00px;font-size:11.8px;line-height:17px;color:#000;letter-spacing:-0.291px;word-spacing:0.291px;">Speed override</div>
<div style="position:absolute;left:480px;top:170px;width:73px;height:17px;background:linear-gradient(#f3f3f3,#e6e6e6);border:1px solid #acacac;border-bottom:none"></div>
<div class="t" style="left:475.0px;width:82px;text-align:center;top:170.00px;font-size:11.8px;line-height:17px;color:#000;letter-spacing:-0.311px;word-spacing:0.311px;">Reclearance</div>
<div style="position:absolute;left:552px;top:168px;width:52px;height:20px;background:#fff;border:1px solid #a0a0a0;border-bottom:none"></div>
<div class="t" style="left:552.0px;width:52px;text-align:center;top:169.00px;font-size:12px;line-height:17px;color:#000;letter-spacing:-1.014px;word-spacing:1.014px;">ETOPS</div>
<div style="position:absolute;left:604px;top:170px;width:70px;height:17px;background:linear-gradient(#f3f3f3,#e6e6e6);border:1px solid #acacac;border-bottom:none"></div>
<div class="t" style="left:599.0px;width:79px;text-align:center;top:170.00px;font-size:11.8px;line-height:17px;color:#000;letter-spacing:-0.381px;word-spacing:0.381px;">Inflight APU</div>
<div style="position:absolute;left:673px;top:170px;width:106px;height:17px;background:linear-gradient(#f3f3f3,#e6e6e6);border:1px solid #acacac;border-bottom:none"></div>
<div class="t" style="left:668.0px;width:115px;text-align:center;top:170.00px;font-size:11.8px;line-height:17px;color:#000;letter-spacing:-0.260px;word-spacing:0.260px;">Restricted airspace</div>
<div style="position:absolute;left:778px;top:170px;width:58px;height:17px;background:linear-gradient(#f3f3f3,#e6e6e6);border:1px solid #acacac;border-bottom:none"></div>
<div class="t" style="left:773.0px;width:67px;text-align:center;top:170.00px;font-size:11.8px;line-height:17px;color:#000;letter-spacing:-0.474px;word-spacing:0.474px;">MapView</div>
<div style="position:absolute;left:250px;top:194px;width:1567px;height:363px;background:#fff;border:1px solid #4f86c6"></div>
<div style="position:absolute;left:1799px;top:195px;width:17px;height:361px;background:linear-gradient(90deg,#f0f0f0,#e8e8e8)"></div>
<svg style="left:1803px;top:203px;" width="9" height="5" viewBox="0 0 9 5"><path d="M0.5 4.5L4.5 0.5L8.5 4.5" fill="none" stroke="#c8c8c8" stroke-width="1"/></svg>
<svg style="left:1803px;top:545px;" width="9" height="5" viewBox="0 0 9 5"><path d="M0.5 0.5L4.5 4.5L8.5 0.5" fill="none" stroke="#c8c8c8" stroke-width="1"/></svg>
<div class="t" style="left:254px;top:200.00px;font-size:12.5px;line-height:18px;color:#1f6bb5;font-weight:bold;">ETOPS settings</div>
<div class="t" style="left:254px;top:221.00px;font-size:11.8px;line-height:17px;color:#1e1e1e;letter-spacing:-0.225px;word-spacing:0.225px;">ETOPS required</div>
<div class="t" style="left:254px;top:243.00px;font-size:11.8px;line-height:17px;color:#1e1e1e;letter-spacing:-0.273px;word-spacing:0.273px;">Calculate ETOPS</div>
<div class="t" style="left:254px;top:265.00px;font-size:11.8px;line-height:17px;color:#1e1e1e;letter-spacing:-0.204px;word-spacing:0.204px;">ETOPS icing time</div>
<div class="t" style="left:254px;top:287.00px;font-size:11.8px;line-height:17px;color:#1e1e1e;letter-spacing:-0.045px;word-spacing:0.045px;">Winds and temps from ETOPS alternates list</div>
<div class="t" style="left:254px;top:309.00px;font-size:11.8px;line-height:17px;color:#1e1e1e;letter-spacing:0.062px;word-spacing:-0.062px;">Maximum diversion time</div>
<div style="position:absolute;left:493px;top:241px;width:115px;height:19px;background:#fff;border:1px solid #a8a8a8"></div>
<div class="t" style="left:495px;top:243.00px;font-size:11.5px;line-height:16px;color:#1e1e1e;letter-spacing:0.177px;word-spacing:-0.177px;">Yes</div>
<div style="position:absolute;left:589px;top:243px;width:17px;height:15px;background:linear-gradient(#f2f2f2,#dcdcdc);border:1px solid #8c8c8c"></div>
<svg style="left:594px;top:249px;" width="7" height="4" viewBox="0 0 7 4"><path d="M0 0H7L3.5 4Z" fill="#111"/></svg>
<div style="position:absolute;left:493px;top:263px;width:115px;height:19px;background:#fff;border:1px solid #a8a8a8"></div>
<div class="t" style="left:495px;top:265.00px;font-size:11.5px;line-height:16px;color:#1e1e1e;letter-spacing:-0.256px;word-spacing:0.256px;">0 h</div>
<div style="position:absolute;left:493px;top:285px;width:115px;height:19px;background:#fff;border:1px solid #a8a8a8"></div>
<div class="t" style="left:495px;top:287.00px;font-size:11.5px;line-height:16px;color:#1e1e1e;letter-spacing:-0.351px;word-spacing:0.351px;">No</div>
<div style="position:absolute;left:589px;top:287px;width:17px;height:15px;background:linear-gradient(#f2f2f2,#dcdcdc);border:1px solid #8c8c8c"></div>
<svg style="left:594px;top:293px;" width="7" height="4" viewBox="0 0 7 4"><path d="M0 0H7L3.5 4Z" fill="#111"/></svg>
<div style="position:absolute;left:493px;top:307px;width:115px;height:19px;background:#fff;border:1px solid #a8a8a8"></div>
<div class="t" style="left:495px;top:309.00px;font-size:11.5px;line-height:16px;color:#1e1e1e;letter-spacing:-0.258px;word-spacing:0.258px;">180 min</div>
<div style="position:absolute;left:589px;top:309px;width:17px;height:15px;background:linear-gradient(#f2f2f2,#dcdcdc);border:1px solid #8c8c8c"></div>
<svg style="left:594px;top:315px;" width="7" height="4" viewBox="0 0 7 4"><path d="M0 0H7L3.5 4Z" fill="#111"/></svg>
<div class="t" style="left:254px;top:354.00px;font-size:12.5px;line-height:18px;color:#1f6bb5;font-weight:bold;">ETOPS results</div>
<div class="t" style="left:254px;top:375.00px;font-size:11.8px;line-height:17px;color:#000;font-weight:bold;letter-spacing:-0.037px;word-spacing:0.037px;">Status</div>
<div class="t" style="left:495px;top:375.00px;font-size:11.8px;line-height:17px;color:#000;font-weight:bold;letter-spacing:0.016px;word-spacing:-0.016px;">OK, optimized for...</div>
<div class="t" style="left:254px;top:397.00px;font-size:11.8px;line-height:17px;color:#000;font-weight:bold;letter-spacing:-0.087px;word-spacing:0.087px;">ETOPS total fuel required</div>
<div class="t" style="left:495px;top:397.00px;font-size:11.8px;line-height:17px;color:#000;font-weight:bold;letter-spacing:-0.366px;word-spacing:0.366px;">67,697.8 kg</div>
<div class="t" style="left:254px;top:419.00px;font-size:11.8px;line-height:17px;color:#1e1e1e;letter-spacing:0.007px;word-spacing:-0.007px;">Critical fuel</div>
<div class="t" style="left:495px;top:419.00px;font-size:11.8px;line-height:17px;color:#1e1e1e;letter-spacing:-0.369px;word-spacing:0.369px;">23,644.5 kg</div>
<div class="t" style="left:254px;top:441.00px;font-size:11.8px;line-height:17px;color:#1e1e1e;letter-spacing:0.066px;word-spacing:-0.066px;">Fuel to account for icing</div>
<div class="t" style="left:495px;top:441.00px;font-size:11.8px;line-height:17px;color:#1e1e1e;letter-spacing:-0.136px;word-spacing:0.136px;">0 kg</div>
<div class="t" style="left:254px;top:463.00px;font-size:11.8px;line-height:17px;color:#1e1e1e;letter-spacing:0.050px;word-spacing:-0.050px;">Reserve increase</div>
<div class="t" style="left:495px;top:463.00px;font-size:11.8px;line-height:17px;color:#1e1e1e;letter-spacing:-0.337px;word-spacing:0.337px;">1,470.1 kg</div>
<div class="t" style="left:254px;top:485.00px;font-size:11.8px;line-height:17px;color:#1e1e1e;letter-spacing:0.069px;word-spacing:-0.069px;">Maximum diversion distance</div>
<div class="t" style="left:495px;top:485.00px;font-size:11.8px;line-height:17px;color:#1e1e1e;letter-spacing:-0.637px;word-spacing:0.637px;">1,272 NM</div>
<div style="position:absolute;left:245px;top:562px;width:1580px;height:10px;background:#ececec"></div>
<div style="position:absolute;left:250px;top:596px;width:1567px;height:452px;background:#fff;border:1px solid #a0a0a0"></div>
<div style="position:absolute;left:252px;top:579px;width:107px;height:17px;background:linear-gradient(#f3f3f3,#e6e6e6);border:1px solid #acacac;border-bottom:none"></div>
<div class="t" style="left:247.0px;width:116px;text-align:center;top:579.00px;font-size:11.8px;line-height:17px;color:#000;letter-spacing:-0.261px;word-spacing:0.261px;">Relevant alternates</div>
<div style="position:absolute;left:358px;top:579px;width:116px;height:17px;background:linear-gradient(#f3f3f3,#e6e6e6);border:1px solid #acacac;border-bottom:none"></div>
<div class="t" style="left:353.0px;width:125px;text-align:center;top:579.00px;font-size:11.8px;line-height:17px;color:#000;letter-spacing:-0.260px;word-spacing:0.260px;">Equal distance points</div>
<div style="position:absolute;left:473px;top:577px;width:101px;height:20px;background:#fff;border:1px solid #a0a0a0;border-bottom:none"></div>
<div class="t" style="left:468.0px;width:111px;text-align:center;top:578.00px;font-size:11.8px;line-height:17px;color:#000;letter-spacing:-0.271px;word-spacing:0.271px;">Equal time points</div>
<div style="position:absolute;left:253px;top:598px;width:1561px;height:447px;background:#fff;border:1px solid #4f86c6"></div>
<div style="position:absolute;left:254px;top:599px;width:20px;height:428px;background:#a0a0a0"></div>
<div style="position:absolute;left:274px;top:599px;width:1522px;height:33px;background:#808080"></div>
<div class="t" style="left:283px;top:609.00px;font-size:12px;line-height:17px;color:#24246a;letter-spacing:0.094px;word-spacing:-0.094px;">Drag a column header here to group by that column.</div>
<div style="position:absolute;left:274px;top:632px;width:1522px;height:57px;background:#a0a0a0"></div>
<div style="position:absolute;left:274px;top:632px;width:2px;height:57px;background:#fff"></div>
<div style="position:absolute;left:529px;top:632px;width:2px;height:57px;background:#fff"></div>
<div style="position:absolute;left:654px;top:632px;width:2px;height:57px;background:#fff"></div>
<div style="position:absolute;left:398px;top:632px;width:1px;height:57px;background:#fff"></div>
<div style="position:absolute;left:399px;top:632px;width:5px;height:57px;background:#9a9a9a"></div>
<div style="position:absolute;left:404px;top:634px;width:1px;height:52px;background:#1a1f5a"></div>
<div style="position:absolute;left:405px;top:632px;width:1px;height:57px;background:#fff"></div>
<div style="position:absolute;left:402px;top:637px;width:1px;height:2px;background:#777"></div>
<div style="position:absolute;left:402px;top:660px;width:1px;height:2px;background:#777"></div>
<div style="position:absolute;left:402px;top:682px;width:1px;height:2px;background:#777"></div>
<div class="t" style="left:276px;top:640.00px;font-size:12px;line-height:17px;color:#f4f4f4;letter-spacing:0.037px;word-spacing:-0.037px;">Index</div>
<div class="t" style="left:407px;top:640.00px;font-size:12px;line-height:17px;color:#f4f4f4;letter-spacing:-0.156px;word-spacing:0.156px;">Lat</div>
<div class="t" style="left:532px;top:640.00px;font-size:12px;line-height:17px;color:#f4f4f4;letter-spacing:-0.133px;word-spacing:0.133px;">Lon</div>
<div class="t" style="left:657px;top:640.00px;font-size:12px;line-height:17px;color:#f4f4f4;letter-spacing:-0.303px;word-spacing:0.303px;">ALTN(i)</div>
<div style="position:absolute;left:276px;top:689px;width:122px;height:24px;background:#f7f7f7"></div>
<div style="position:absolute;left:405px;top:689px;width:124px;height:24px;background:#f7f7f7"></div>
<div style="position:absolute;left:531px;top:689px;width:123px;height:24px;background:#f7f7f7"></div>
<div style="position:absolute;left:656px;top:689px;width:1140px;height:24px;background:#f7f7f7"></div>
<div style="position:absolute;left:254px;top:689px;width:20px;height:1px;background:#fff"></div>
<div style="position:absolute;left:399px;top:689px;width:5px;height:24px;background:#dde4ef"></div>
<div class="t" style="left:277px;top:694.00px;font-size:12px;line-height:17px;color:#6a6a6a;letter-spacing:-0.667px;word-spacing:0.667px;">1</div>
<div class="t" style="left:408px;top:694.00px;font-size:12px;line-height:17px;color:#6a6a6a;letter-spacing:-0.252px;word-spacing:0.252px;">-5.999 deg</div>
<div class="t" style="left:533px;top:694.00px;font-size:12px;line-height:17px;color:#6a6a6a;letter-spacing:-0.267px;word-spacing:0.267px;">179 deg</div>
<div class="t" style="left:658px;top:694.00px;font-size:12px;line-height:17px;color:#6a6a6a;letter-spacing:-0.800px;word-spacing:0.800px;">NFFN</div>
<div style="position:absolute;left:276px;top:713px;width:122px;height:24px;background:#e8e9ee"></div>
<div style="position:absolute;left:405px;top:713px;width:124px;height:24px;background:#e8e9ee"></div>
<div style="position:absolute;left:531px;top:713px;width:123px;height:24px;background:#e8e9ee"></div>
<div style="position:absolute;left:656px;top:713px;width:1140px;height:24px;background:#e8e9ee"></div>
<div style="position:absolute;left:254px;top:713px;width:20px;height:1px;background:#fff"></div>
<div style="position:absolute;left:399px;top:713px;width:5px;height:24px;background:#dde4ef"></div>
<div class="t" style="left:277px;top:718.00px;font-size:12px;line-height:17px;color:#6a6a6a;letter-spacing:-0.667px;word-spacing:0.667px;">2</div>
<div class="t" style="left:408px;top:718.00px;font-size:12px;line-height:17px;color:#6a6a6a;letter-spacing:-0.360px;word-spacing:0.360px;">0.04835 deg</div>
<div class="t" style="left:533px;top:718.00px;font-size:12px;line-height:17px;color:#6a6a6a;letter-spacing:-0.252px;word-spacing:0.252px;">-176.1 deg</div>
<div class="t" style="left:658px;top:718.00px;font-size:12px;line-height:17px;color:#6a6a6a;letter-spacing:-0.635px;word-spacing:0.635px;">NSFA</div>
<div style="position:absolute;left:276px;top:737px;width:122px;height:24px;background:#f7f7f7"></div>
<div style="position:absolute;left:405px;top:737px;width:124px;height:24px;background:#f7f7f7"></div>
<div style="position:absolute;left:531px;top:737px;width:123px;height:24px;background:#f7f7f7"></div>
<div style="position:absolute;left:656px;top:737px;width:1140px;height:24px;background:#f7f7f7"></div>
<div style="position:absolute;left:254px;top:737px;width:20px;height:1px;background:#fff"></div>
<div style="position:absolute;left:399px;top:737px;width:5px;height:24px;background:#dde4ef"></div>
<div class="t" style="left:277px;top:742.00px;font-size:12px;line-height:17px;color:#6a6a6a;letter-spacing:-0.667px;word-spacing:0.667px;">3</div>
<div class="t" style="left:408px;top:742.00px;font-size:12px;line-height:17px;color:#6a6a6a;letter-spacing:-0.284px;word-spacing:0.284px;">7.314 deg</div>
<div class="t" style="left:533px;top:742.00px;font-size:12px;line-height:17px;color:#6a6a6a;letter-spacing:-0.252px;word-spacing:0.252px;">-170.3 deg</div>
<div class="t" style="left:658px;top:742.00px;font-size:12px;line-height:17px;color:#6a6a6a;letter-spacing:-0.800px;word-spacing:0.800px;">PKMJ</div>
<svg style="left:261px;top:694px;" width="6" height="9" viewBox="0 0 6 9"><path d="M0 0L6 4.5L0 9Z" fill="#fff"/></svg>
<div style="position:absolute;left:254px;top:761px;width:20px;height:1px;background:#fff"></div>
<div style="position:absolute;left:1796px;top:599px;width:17px;height:428px;background:#f0f0f0"></div>
<svg style="left:1800px;top:1017px;" width="9" height="5" viewBox="0 0 9 5"><path d="M0.5 0.5L4.5 4.5L8.5 0.5" fill="none" stroke="#c8c8c8" stroke-width="1"/></svg>
<div style="position:absolute;left:254px;top:1027px;width:1542px;height:17px;background:#f0f0f0"></div>
<div style="position:absolute;left:274px;top:1027px;width:941px;height:17px;background:#cdcdcd"></div>
<svg style="left:262px;top:1031px;" width="5" height="9" viewBox="0 0 5 9"><path d="M4.5 0.5L0.5 4.5L4.5 8.5" fill="none" stroke="#7a7a7a" stroke-width="1.1"/></svg>
<svg style="left:1785px;top:1031px;" width="5" height="9" viewBox="0 0 5 9"><path d="M0.5 0.5L4.5 4.5L0.5 8.5" fill="none" stroke="#7a7a7a" stroke-width="1.1"/></svg>
<div style="position:absolute;left:775px;top:210px;width:1032px;height:753px;box-shadow:1px 4px 18px 1px rgba(0,0,0,0.30);background:#fff"></div>
<div style="position:absolute;left:775px;top:210px;width:1032px;height:753px;background:#fff;border:1px solid #6a6a6a"></div>
<svg style="left:785px;top:219px;" width="13" height="13" viewBox="0 0 13 13"><circle cx="6.5" cy="6.5" r="6.3" fill="#0e6a7e"/><circle cx="6.5" cy="6.5" r="4.8" fill="#167f94"/><text x="6.5" y="8.6" font-size="5.5" fill="#fff" text-anchor="middle" font-family="Liberation Sans" font-weight="bold">MS</text></svg>
<div class="t" style="left:805px;top:218.00px;font-size:12px;line-height:17px;color:#111;letter-spacing:-0.487px;word-spacing:0.487px;">ETOPS alternates list</div>
<div style="position:absolute;left:1687px;top:225px;width:10px;height:1px;background:#111"></div>
<div style="position:absolute;left:1732px;top:220px;width:10px;height:10px;border:1px solid #111"></div>
<svg style="left:1778px;top:220px;" width="10" height="10" viewBox="0 0 10 10"><path d="M0.3 0.3L9.7 9.7M9.7 0.3L0.3 9.7" stroke="#111" stroke-width="1.1"/></svg>
<div style="position:absolute;left:776px;top:241px;width:1030px;height:691px;background:#fff;border:1px solid #4f86c6"></div>
<div style="position:absolute;left:1805px;top:241px;width:1px;height:691px;background:#4f86c6"></div>
<div style="position:absolute;left:777px;top:242px;width:20px;height:689px;background:#a0a0a0"></div>
<div style="position:absolute;left:797px;top:268px;width:5px;height:663px;background:#dfe5ef"></div>
<div style="position:absolute;left:797px;top:242px;width:990px;height:26px;background:#a0a0a0"></div>
<div style="position:absolute;left:799px;top:247px;width:2px;height:2px;background:#777"></div>
<div style="position:absolute;left:799px;top:253px;width:2px;height:2px;background:#777"></div>
<div style="position:absolute;left:799px;top:260px;width:2px;height:2px;background:#777"></div>
<div style="position:absolute;left:802px;top:244px;width:1px;height:21px;background:#1a1f5a"></div>
<div style="position:absolute;left:803px;top:242px;width:1px;height:26px;background:#fff"></div>
<div class="t" style="left:805px;top:250.00px;font-size:12px;line-height:17px;color:#f6f6f6;letter-spacing:-0.203px;word-spacing:0.203px;">IsSelected</div>
<div style="position:absolute;left:804px;top:268px;width:123px;height:19px;background:#fff;border:1px solid #9e9e9e;border-top:none"></div>
<div style="position:absolute;left:927px;top:242px;width:2px;height:26px;background:#fff"></div>
<div class="t" style="left:930px;top:250.00px;font-size:12px;line-height:17px;color:#f6f6f6;letter-spacing:-0.291px;word-spacing:0.291px;">ICAO 4-letter code</div>
<div style="position:absolute;left:929px;top:268px;width:123px;height:19px;background:#fff;border:1px solid #9e9e9e;border-top:none"></div>
<div style="position:absolute;left:1052px;top:242px;width:2px;height:26px;background:#fff"></div>
<div class="t" style="left:1055px;top:250.00px;font-size:12px;line-height:17px;color:#f6f6f6;letter-spacing:-0.122px;word-spacing:0.122px;">IATA 3-letter code</div>
<div style="position:absolute;left:1054px;top:268px;width:123px;height:19px;background:#fff;border:1px solid #9e9e9e;border-top:none"></div>
<div style="position:absolute;left:1177px;top:242px;width:2px;height:26px;background:#fff"></div>
<div class="t" style="left:1180px;top:250.00px;font-size:12px;line-height:17px;color:#f6f6f6;letter-spacing:-0.177px;word-spacing:0.177px;">Airport name</div>
<div style="position:absolute;left:1179px;top:268px;width:123px;height:19px;background:#fff;border:1px solid #9e9e9e;border-top:none"></div>
<div style="position:absolute;left:1302px;top:242px;width:2px;height:26px;background:#fff"></div>
<div class="t" style="left:1305px;top:250.00px;font-size:12px;line-height:17px;color:#f6f6f6;letter-spacing:-0.173px;word-spacing:0.173px;">Regional group</div>
<div style="position:absolute;left:1304px;top:268px;width:123px;height:19px;background:#fff;border:1px solid #9e9e9e;border-top:none"></div>
<div style="position:absolute;left:1427px;top:242px;width:2px;height:26px;background:#fff"></div>
<div class="t" style="left:1430px;top:250.00px;font-size:12px;line-height:17px;color:#f6f6f6;letter-spacing:-0.424px;word-spacing:0.424px;">ETOPS Category</div>
<div style="position:absolute;left:1429px;top:268px;width:123px;height:19px;background:#fff;border:1px solid #9e9e9e;border-top:none"></div>
<div style="position:absolute;left:1552px;top:242px;width:2px;height:26px;background:#fff"></div>
<div class="t" style="left:1555px;top:250.00px;font-size:12px;line-height:17px;color:#f6f6f6;letter-spacing:-0.234px;word-spacing:0.234px;">Wind speed</div>
<div style="position:absolute;left:1554px;top:268px;width:123px;height:19px;background:#fff;border:1px solid #9e9e9e;border-top:none"></div>
<div style="position:absolute;left:1677px;top:242px;width:2px;height:26px;background:#fff"></div>
<div class="t" style="left:1680px;top:250.00px;font-size:12px;line-height:17px;color:#f6f6f6;letter-spacing:-0.186px;word-spacing:0.186px;">ISA deviation</div>
<div style="position:absolute;left:1679px;top:268px;width:108px;height:19px;background:#fff;border:1px solid #9e9e9e;border-top:none"></div>
<div style="position:absolute;left:777px;top:267px;width:20px;height:1px;background:#fff"></div>
<div style="position:absolute;left:777px;top:287px;width:20px;height:1px;background:#fff"></div>
<svg style="left:781px;top:269px;" width="12" height="11" viewBox="0 0 12 11"><defs><linearGradient id="fg" x1="0" y1="0" x2="1" y2="0"><stop offset="0" stop-color="#9a9a9a"/><stop offset="0.5" stop-color="#e6e6e6"/><stop offset="1" stop-color="#555"/></linearGradient></defs><path d="M0.3 0.5 H11.7 L7.3 5.3 V10.6 H4.7 V5.3Z" fill="url(#fg)" stroke="#555" stroke-width="0.6"/></svg>
<div style="position:absolute;left:807px;top:270px;width:14px;height:13px;background:#fff;border:1px solid #444"></div>
<div style="position:absolute;left:810px;top:273px;width:8px;height:7px;background:#222"></div>
<div style="position:absolute;left:804px;top:287px;width:123px;height:24px;background:#f7f7f7"></div>
<div style="position:absolute;left:929px;top:287px;width:123px;height:24px;background:#f7f7f7"></div>
<div style="position:absolute;left:1054px;top:287px;width:123px;height:24px;background:#f7f7f7"></div>
<div style="position:absolute;left:1179px;top:287px;width:123px;height:24px;background:#f7f7f7"></div>
<div style="position:absolute;left:1304px;top:287px;width:123px;height:24px;background:#f7f7f7"></div>
<div style="position:absolute;left:1429px;top:287px;width:123px;height:24px;background:#f7f7f7"></div>
<div style="position:absolute;left:1554px;top:287px;width:123px;height:24px;background:#f7f7f7"></div>
<div style="position:absolute;left:1679px;top:287px;width:108px;height:24px;background:#f7f7f7"></div>
<div style="position:absolute;left:777px;top:310px;width:20px;height:1px;background:#fff"></div>
<div style="position:absolute;left:807px;top:292px;width:14px;height:13px;background:#fff;border:1px solid #444"></div>
<svg style="left:807px;top:292px;" width="13" height="13" viewBox="0 0 13 13"><path d="M2.5 6.5 L5.2 9.5 L10.5 2.5" fill="none" stroke="#111" stroke-width="1.8"/></svg>
<div class="t" style="left:931px;top:292.00px;font-size:12px;line-height:17px;color:#6b6b6b;letter-spacing:-0.883px;word-spacing:0.883px;">AGGH</div>
<div class="t" style="left:1056px;top:292.00px;font-size:12px;line-height:17px;color:#6b6b6b;letter-spacing:-0.689px;word-spacing:0.689px;">HIR</div>
<div class="t" style="left:1181px;top:292.00px;font-size:12px;line-height:17px;color:#6b6b6b;letter-spacing:-0.497px;word-spacing:0.497px;">HONIARA/...</div>
<div class="t" style="left:1306px;top:292.00px;font-size:12px;line-height:17px;color:#6b6b6b;letter-spacing:-0.504px;word-spacing:0.504px;">SPA</div>
<div class="t" style="left:1431px;top:292.00px;font-size:12px;line-height:17px;color:#6b6b6b;letter-spacing:-0.667px;word-spacing:0.667px;">6</div>
<div class="t" style="left:1556px;top:292.00px;font-size:12px;line-height:17px;color:#2b2b2b;letter-spacing:-0.243px;word-spacing:0.243px;">0 kts</div>
<div class="t" style="left:1681px;top:292.00px;font-size:12px;line-height:17px;color:#2b2b2b;letter-spacing:-0.511px;word-spacing:0.511px;">0 °C</div>
<div style="position:absolute;left:804px;top:311px;width:123px;height:24px;background:#e8e9ee"></div>
<div style="position:absolute;left:929px;top:311px;width:123px;height:24px;background:#e8e9ee"></div>
<div style="position:absolute;left:1054px;top:311px;width:123px;height:24px;background:#e8e9ee"></div>
<div style="position:absolute;left:1179px;top:311px;width:123px;height:24px;background:#e8e9ee"></div>
<div style="position:absolute;left:1304px;top:311px;width:123px;height:24px;background:#e8e9ee"></div>
<div style="position:absolute;left:1429px;top:311px;width:123px;height:24px;background:#e8e9ee"></div>
<div style="position:absolute;left:1554px;top:311px;width:123px;height:24px;background:#e8e9ee"></div>
<div style="position:absolute;left:1679px;top:311px;width:108px;height:24px;background:#e8e9ee"></div>
<div style="position:absolute;left:777px;top:334px;width:20px;height:1px;background:#fff"></div>
<div style="position:absolute;left:807px;top:316px;width:14px;height:13px;background:#fff;border:1px solid #444"></div>
<svg style="left:807px;top:316px;" width="13" height="13" viewBox="0 0 13 13"><path d="M2.5 6.5 L5.2 9.5 L10.5 2.5" fill="none" stroke="#111" stroke-width="1.8"/></svg>
<div class="t" style="left:931px;top:316.00px;font-size:12px;line-height:17px;color:#6b6b6b;letter-spacing:-0.834px;word-spacing:0.834px;">ANYN</div>
<div class="t" style="left:1056px;top:316.00px;font-size:12px;line-height:17px;color:#6b6b6b;letter-spacing:-0.689px;word-spacing:0.689px;">INU</div>
<div class="t" style="left:1181px;top:316.00px;font-size:12px;line-height:17px;color:#6b6b6b;letter-spacing:-0.510px;word-spacing:0.510px;">NAURU, Nauru</div>
<div class="t" style="left:1306px;top:316.00px;font-size:12px;line-height:17px;color:#6b6b6b;letter-spacing:-0.504px;word-spacing:0.504px;">SPA</div>
<div class="t" style="left:1431px;top:316.00px;font-size:12px;line-height:17px;color:#6b6b6b;letter-spacing:-0.667px;word-spacing:0.667px;">2</div>
<div class="t" style="left:1556px;top:316.00px;font-size:12px;line-height:17px;color:#2b2b2b;letter-spacing:-0.243px;word-spacing:0.243px;">0 kts</div>
<div class="t" style="left:1681px;top:316.00px;font-size:12px;line-height:17px;color:#2b2b2b;letter-spacing:-0.511px;word-spacing:0.511px;">0 °C</div>
<div style="position:absolute;left:804px;top:335px;width:123px;height:24px;background:#f7f7f7"></div>
<div style="position:absolute;left:929px;top:335px;width:123px;height:24px;background:#f7f7f7"></div>
<div style="position:absolute;left:1054px;top:335px;width:123px;height:24px;background:#f7f7f7"></div>
<div style="position:absolute;left:1179px;top:335px;width:123px;height:24px;background:#f7f7f7"></div>
<div style="position:absolute;left:1304px;top:335px;width:123px;height:24px;background:#f7f7f7"></div>
<div style="position:absolute;left:1429px;top:335px;width:123px;height:24px;background:#f7f7f7"></div>
<div style="position:absolute;left:1554px;top:335px;width:123px;height:24px;background:#f7f7f7"></div>
<div style="position:absolute;left:1679px;top:335px;width:108px;height:24px;background:#f7f7f7"></div>
<div style="position:absolute;left:777px;top:358px;width:20px;height:1px;background:#fff"></div>
<div style="position:absolute;left:807px;top:340px;width:14px;height:13px;background:#fff;border:1px solid #444"></div>
<svg style="left:807px;top:340px;" width="13" height="13" viewBox="0 0 13 13"><path d="M2.5 6.5 L5.2 9.5 L10.5 2.5" fill="none" stroke="#111" stroke-width="1.8"/></svg>
<div class="t" style="left:931px;top:340.00px;font-size:12px;line-height:17px;color:#6b6b6b;letter-spacing:-0.611px;word-spacing:0.611px;">AYGA</div>
<div class="t" style="left:1056px;top:340.00px;font-size:12px;line-height:17px;color:#6b6b6b;letter-spacing:-0.845px;word-spacing:0.845px;">GKA</div>
<div class="t" style="left:1181px;top:340.00px;font-size:12px;line-height:17px;color:#6b6b6b;letter-spacing:-0.440px;word-spacing:0.440px;">GOROKA, Papua...</div>
<div class="t" style="left:1306px;top:340.00px;font-size:12px;line-height:17px;color:#6b6b6b;letter-spacing:-0.504px;word-spacing:0.504px;">SPA</div>
<div class="t" style="left:1431px;top:340.00px;font-size:12px;line-height:17px;color:#6b6b6b;letter-spacing:-0.667px;word-spacing:0.667px;">1</div>
<div class="t" style="left:1556px;top:340.00px;font-size:12px;line-height:17px;color:#2b2b2b;letter-spacing:-0.243px;word-spacing:0.243px;">0 kts</div>
<div class="t" style="left:1681px;top:340.00px;font-size:12px;line-height:17px;color:#2b2b2b;letter-spacing:-0.511px;word-spacing:0.511px;">0 °C</div>
<div style="position:absolute;left:804px;top:359px;width:123px;height:24px;background:#e8e9ee"></div>
<div style="position:absolute;left:929px;top:359px;width:123px;height:24px;background:#e8e9ee"></div>
<div style="position:absolute;left:1054px;top:359px;width:123px;height:24px;background:#e8e9ee"></div>
<div style="position:absolute;left:1179px;top:359px;width:123px;height:24px;background:#e8e9ee"></div>
<div style="position:absolute;left:1304px;top:359px;width:123px;height:24px;background:#e8e9ee"></div>
<div style="position:absolute;left:1429px;top:359px;width:123px;height:24px;background:#e8e9ee"></div>
<div style="position:absolute;left:1554px;top:359px;width:123px;height:24px;background:#e8e9ee"></div>
<div style="position:absolute;left:1679px;top:359px;width:108px;height:24px;background:#e8e9ee"></div>
<div style="position:absolute;left:777px;top:382px;width:20px;height:1px;background:#fff"></div>
<div style="position:absolute;left:807px;top:364px;width:14px;height:13px;background:#fff;border:1px solid #444"></div>
<svg style="left:807px;top:364px;" width="13" height="13" viewBox="0 0 13 13"><path d="M2.5 6.5 L5.2 9.5 L10.5 2.5" fill="none" stroke="#111" stroke-width="1.8"/></svg>
<div class="t" style="left:931px;top:364.00px;font-size:12px;line-height:17px;color:#6b6b6b;letter-spacing:-0.644px;word-spacing:0.644px;">AYMH</div>
<div class="t" style="left:1056px;top:364.00px;font-size:12px;line-height:17px;color:#6b6b6b;letter-spacing:-0.889px;word-spacing:0.889px;">HGU</div>
<div class="t" style="left:1181px;top:364.00px;font-size:12px;line-height:17px;color:#6b6b6b;letter-spacing:-0.604px;word-spacing:0.604px;">MOUNT HAGEN,...</div>
<div class="t" style="left:1306px;top:364.00px;font-size:12px;line-height:17px;color:#6b6b6b;letter-spacing:-0.504px;word-spacing:0.504px;">SPA</div>
<div class="t" style="left:1431px;top:364.00px;font-size:12px;line-height:17px;color:#6b6b6b;letter-spacing:-0.667px;word-spacing:0.667px;">1</div>
<div class="t" style="left:1556px;top:364.00px;font-size:12px;line-height:17px;color:#2b2b2b;letter-spacing:-0.243px;word-spacing:0.243px;">0 kts</div>
<div class="t" style="left:1681px;top:364.00px;font-size:12px;line-height:17px;color:#2b2b2b;letter-spacing:-0.511px;word-spacing:0.511px;">0 °C</div>
<div style="position:absolute;left:804px;top:383px;width:123px;height:24px;background:#f7f7f7"></div>
<div style="position:absolute;left:929px;top:383px;width:123px;height:24px;background:#f7f7f7"></div>
<div style="position:absolute;left:1054px;top:383px;width:123px;height:24px;background:#f7f7f7"></div>
<div style="position:absolute;left:1179px;top:383px;width:123px;height:24px;background:#f7f7f7"></div>
<div style="position:absolute;left:1304px;top:383px;width:123px;height:24px;background:#f7f7f7"></div>
<div style="position:absolute;left:1429px;top:383px;width:123px;height:24px;background:#f7f7f7"></div>
<div style="position:absolute;left:1554px;top:383px;width:123px;height:24px;background:#f7f7f7"></div>
<div style="position:absolute;left:1679px;top:383px;width:108px;height:24px;background:#f7f7f7"></div>
<div style="position:absolute;left:777px;top:406px;width:20px;height:1px;background:#fff"></div>
<div style="position:absolute;left:807px;top:388px;width:14px;height:13px;background:#fff;border:1px solid #444"></div>
<svg style="left:807px;top:388px;" width="13" height="13" viewBox="0 0 13 13"><path d="M2.5 6.5 L5.2 9.5 L10.5 2.5" fill="none" stroke="#111" stroke-width="1.8"/></svg>
<div class="t" style="left:931px;top:388.00px;font-size:12px;line-height:17px;color:#6b6b6b;letter-spacing:-0.661px;word-spacing:0.661px;">AYMO</div>
<div class="t" style="left:1056px;top:388.00px;font-size:12px;line-height:17px;color:#6b6b6b;letter-spacing:-0.867px;word-spacing:0.867px;">MAS</div>
<div class="t" style="left:1181px;top:388.00px;font-size:12px;line-height:17px;color:#6b6b6b;letter-spacing:-0.449px;word-spacing:0.449px;">MOMOTE, Papua...</div>
<div class="t" style="left:1306px;top:388.00px;font-size:12px;line-height:17px;color:#6b6b6b;letter-spacing:-0.504px;word-spacing:0.504px;">SPA</div>
<div class="t" style="left:1431px;top:388.00px;font-size:12px;line-height:17px;color:#6b6b6b;letter-spacing:-0.667px;word-spacing:0.667px;">2</div>
<div class="t" style="left:1556px;top:388.00px;font-size:12px;line-height:17px;color:#2b2b2b;letter-spacing:-0.243px;word-spacing:0.243px;">0 kts</div>
<div class="t" style="left:1681px;top:388.00px;font-size:12px;line-height:17px;color:#2b2b2b;letter-spacing:-0.511px;word-spacing:0.511px;">0 °C</div>
<div style="position:absolute;left:804px;top:407px;width:123px;height:24px;background:#e8e9ee"></div>
<div style="position:absolute;left:929px;top:407px;width:123px;height:24px;background:#e8e9ee"></div>
<div style="position:absolute;left:1054px;top:407px;width:123px;height:24px;background:#e8e9ee"></div>
<div style="position:absolute;left:1179px;top:407px;width:123px;height:24px;background:#e8e9ee"></div>
<div style="position:absolute;left:1304px;top:407px;width:123px;height:24px;background:#e8e9ee"></div>
<div style="position:absolute;left:1429px;top:407px;width:123px;height:24px;background:#e8e9ee"></div>
<div style="position:absolute;left:1554px;top:407px;width:123px;height:24px;background:#e8e9ee"></div>
<div style="position:absolute;left:1679px;top:407px;width:108px;height:24px;background:#e8e9ee"></div>
<div style="position:absolute;left:777px;top:430px;width:20px;height:1px;background:#fff"></div>
<div style="position:absolute;left:807px;top:412px;width:14px;height:13px;background:#fff;border:1px solid #444"></div>
<svg style="left:807px;top:412px;" width="13" height="13" viewBox="0 0 13 13"><path d="M2.5 6.5 L5.2 9.5 L10.5 2.5" fill="none" stroke="#111" stroke-width="1.8"/></svg>
<div class="t" style="left:931px;top:412.00px;font-size:12px;line-height:17px;color:#6b6b6b;letter-spacing:-0.577px;word-spacing:0.577px;">AYNZ</div>
<div class="t" style="left:1056px;top:412.00px;font-size:12px;line-height:17px;color:#6b6b6b;letter-spacing:-0.756px;word-spacing:0.756px;">LAE</div>
<div class="t" style="left:1181px;top:412.00px;font-size:12px;line-height:17px;color:#6b6b6b;letter-spacing:-0.510px;word-spacing:0.510px;">LAE / NADZAB,...</div>
<div class="t" style="left:1306px;top:412.00px;font-size:12px;line-height:17px;color:#6b6b6b;letter-spacing:-0.504px;word-spacing:0.504px;">SPA</div>
<div class="t" style="left:1431px;top:412.00px;font-size:12px;line-height:17px;color:#6b6b6b;letter-spacing:-0.667px;word-spacing:0.667px;">2</div>
<div class="t" style="left:1556px;top:412.00px;font-size:12px;line-height:17px;color:#2b2b2b;letter-spacing:-0.243px;word-spacing:0.243px;">0 kts</div>
<div class="t" style="left:1681px;top:412.00px;font-size:12px;line-height:17px;color:#2b2b2b;letter-spacing:-0.511px;word-spacing:0.511px;">0 °C</div>
<div style="position:absolute;left:804px;top:431px;width:123px;height:24px;background:#f7f7f7"></div>
<div style="position:absolute;left:929px;top:431px;width:123px;height:24px;background:#f7f7f7"></div>
<div style="position:absolute;left:1054px;top:431px;width:123px;height:24px;background:#f7f7f7"></div>
<div style="position:absolute;left:1179px;top:431px;width:123px;height:24px;background:#f7f7f7"></div>
<div style="position:absolute;left:1304px;top:431px;width:123px;height:24px;background:#f7f7f7"></div>
<div style="position:absolute;left:1429px;top:431px;width:123px;height:24px;background:#f7f7f7"></div>
<div style="position:absolute;left:1554px;top:431px;width:123px;height:24px;background:#f7f7f7"></div>
<div style="position:absolute;left:1679px;top:431px;width:108px;height:24px;background:#f7f7f7"></div>
<div style="position:absolute;left:777px;top:454px;width:20px;height:1px;background:#fff"></div>
<div style="position:absolute;left:807px;top:436px;width:14px;height:13px;background:#fff;border:1px solid #444"></div>
<svg style="left:807px;top:436px;" width="13" height="13" viewBox="0 0 13 13"><path d="M2.5 6.5 L5.2 9.5 L10.5 2.5" fill="none" stroke="#111" stroke-width="1.8"/></svg>
<div class="t" style="left:931px;top:436.00px;font-size:12px;line-height:17px;color:#6b6b6b;letter-spacing:-0.578px;word-spacing:0.578px;">AYPY</div>
<div class="t" style="left:1056px;top:436.00px;font-size:12px;line-height:17px;color:#6b6b6b;letter-spacing:-0.911px;word-spacing:0.911px;">POM</div>
<div class="t" style="left:1181px;top:436.00px;font-size:12px;line-height:17px;color:#6b6b6b;letter-spacing:-0.579px;word-spacing:0.579px;">PORT MORESBY /...</div>
<div class="t" style="left:1306px;top:436.00px;font-size:12px;line-height:17px;color:#6b6b6b;letter-spacing:-0.504px;word-spacing:0.504px;">SPA</div>
<div class="t" style="left:1431px;top:436.00px;font-size:12px;line-height:17px;color:#6b6b6b;letter-spacing:-0.667px;word-spacing:0.667px;">6</div>
<div class="t" style="left:1556px;top:436.00px;font-size:12px;line-height:17px;color:#2b2b2b;letter-spacing:-0.243px;word-spacing:0.243px;">0 kts</div>
<div class="t" style="left:1681px;top:436.00px;font-size:12px;line-height:17px;color:#2b2b2b;letter-spacing:-0.511px;word-spacing:0.511px;">0 °C</div>
<div style="position:absolute;left:804px;top:455px;width:123px;height:24px;background:#e8e9ee"></div>
<div style="position:absolute;left:929px;top:455px;width:123px;height:24px;background:#e8e9ee"></div>
<div style="position:absolute;left:1054px;top:455px;width:123px;height:24px;background:#e8e9ee"></div>
<div style="position:absolute;left:1179px;top:455px;width:123px;height:24px;background:#e8e9ee"></div>
<div style="position:absolute;left:1304px;top:455px;width:123px;height:24px;background:#e8e9ee"></div>
<div style="position:absolute;left:1429px;top:455px;width:123px;height:24px;background:#e8e9ee"></div>
<div style="position:absolute;left:1554px;top:455px;width:123px;height:24px;background:#e8e9ee"></div>
<div style="position:absolute;left:1679px;top:455px;width:108px;height:24px;background:#e8e9ee"></div>
<div style="position:absolute;left:777px;top:478px;width:20px;height:1px;background:#fff"></div>
<div style="position:absolute;left:807px;top:460px;width:14px;height:13px;background:#fff;border:1px solid #444"></div>
<svg style="left:807px;top:460px;" width="13" height="13" viewBox="0 0 13 13"><path d="M2.5 6.5 L5.2 9.5 L10.5 2.5" fill="none" stroke="#111" stroke-width="1.8"/></svg>
<div class="t" style="left:931px;top:460.00px;font-size:12px;line-height:17px;color:#6b6b6b;letter-spacing:-0.661px;word-spacing:0.661px;">AYWK</div>
<div class="t" style="left:1056px;top:460.00px;font-size:12px;line-height:17px;color:#6b6b6b;letter-spacing:-1.022px;word-spacing:1.022px;">WWK</div>
<div class="t" style="left:1181px;top:460.00px;font-size:12px;line-height:17px;color:#6b6b6b;letter-spacing:-0.575px;word-spacing:0.575px;">WEWAK / BORAM,...</div>
<div class="t" style="left:1306px;top:460.00px;font-size:12px;line-height:17px;color:#6b6b6b;letter-spacing:-0.504px;word-spacing:0.504px;">SPA</div>
<div class="t" style="left:1431px;top:460.00px;font-size:12px;line-height:17px;color:#6b6b6b;letter-spacing:-0.667px;word-spacing:0.667px;">2</div>
<div class="t" style="left:1556px;top:460.00px;font-size:12px;line-height:17px;color:#2b2b2b;letter-spacing:-0.243px;word-spacing:0.243px;">0 kts</div>
<div class="t" style="left:1681px;top:460.00px;font-size:12px;line-height:17px;color:#2b2b2b;letter-spacing:-0.511px;word-spacing:0.511px;">0 °C</div>
<div style="position:absolute;left:804px;top:479px;width:123px;height:24px;background:#f7f7f7"></div>
<div style="position:absolute;left:929px;top:479px;width:123px;height:24px;background:#f7f7f7"></div>
<div style="position:absolute;left:1054px;top:479px;width:123px;height:24px;background:#f7f7f7"></div>
<div style="position:absolute;left:1179px;top:479px;width:123px;height:24px;background:#f7f7f7"></div>
<div style="position:absolute;left:1304px;top:479px;width:123px;height:24px;background:#f7f7f7"></div>
<div style="position:absolute;left:1429px;top:479px;width:123px;height:24px;background:#f7f7f7"></div>
<div style="position:absolute;left:1554px;top:479px;width:123px;height:24px;background:#f7f7f7"></div>
<div style="position:absolute;left:1679px;top:479px;width:108px;height:24px;background:#f7f7f7"></div>
<div style="position:absolute;left:777px;top:502px;width:20px;height:1px;background:#fff"></div>
<div style="position:absolute;left:807px;top:484px;width:14px;height:13px;background:#fff;border:1px solid #444"></div>
<svg style="left:807px;top:484px;" width="13" height="13" viewBox="0 0 13 13"><path d="M2.5 6.5 L5.2 9.5 L10.5 2.5" fill="none" stroke="#111" stroke-width="1.8"/></svg>
<div class="t" style="left:931px;top:484.00px;font-size:12px;line-height:17px;color:#6b6b6b;letter-spacing:-0.917px;word-spacing:0.917px;">BGBW</div>
<div class="t" style="left:1056px;top:484.00px;font-size:12px;line-height:17px;color:#6b6b6b;letter-spacing:-0.823px;word-spacing:0.823px;">UAK</div>
<div class="t" style="left:1181px;top:484.00px;font-size:12px;line-height:17px;color:#6b6b6b;letter-spacing:-0.600px;word-spacing:0.600px;">NARSARSUAQ,...</div>
<div class="t" style="left:1306px;top:484.00px;font-size:12px;line-height:17px;color:#6b6b6b;letter-spacing:-0.845px;word-spacing:0.845px;">EUR</div>
<div class="t" style="left:1431px;top:484.00px;font-size:12px;line-height:17px;color:#6b6b6b;letter-spacing:-0.667px;word-spacing:0.667px;">3</div>
<div class="t" style="left:1556px;top:484.00px;font-size:12px;line-height:17px;color:#2b2b2b;letter-spacing:-0.243px;word-spacing:0.243px;">0 kts</div>
<div class="t" style="left:1681px;top:484.00px;font-size:12px;line-height:17px;color:#2b2b2b;letter-spacing:-0.511px;word-spacing:0.511px;">0 °C</div>
<div style="position:absolute;left:804px;top:503px;width:123px;height:24px;background:#e8e9ee"></div>
<div style="position:absolute;left:929px;top:503px;width:123px;height:24px;background:#e8e9ee"></div>
<div style="position:absolute;left:1054px;top:503px;width:123px;height:24px;background:#e8e9ee"></div>
<div style="position:absolute;left:1179px;top:503px;width:123px;height:24px;background:#e8e9ee"></div>
<div style="position:absolute;left:1304px;top:503px;width:123px;height:24px;background:#e8e9ee"></div>
<div style="position:absolute;left:1429px;top:503px;width:123px;height:24px;background:#e8e9ee"></div>
<div style="position:absolute;left:1554px;top:503px;width:123px;height:24px;background:#e8e9ee"></div>
<div style="position:absolute;left:1679px;top:503px;width:108px;height:24px;background:#e8e9ee"></div>
<div style="position:absolute;left:777px;top:526px;width:20px;height:1px;background:#fff"></div>
<div style="position:absolute;left:807px;top:508px;width:14px;height:13px;background:#fff;border:1px solid #444"></div>
<svg style="left:807px;top:508px;" width="13" height="13" viewBox="0 0 13 13"><path d="M2.5 6.5 L5.2 9.5 L10.5 2.5" fill="none" stroke="#111" stroke-width="1.8"/></svg>
<div class="t" style="left:931px;top:508.00px;font-size:12px;line-height:17px;color:#6b6b6b;letter-spacing:-0.883px;word-spacing:0.883px;">BGGH</div>
<div class="t" style="left:1056px;top:508.00px;font-size:12px;line-height:17px;color:#6b6b6b;letter-spacing:-0.911px;word-spacing:0.911px;">GOH</div>
<div class="t" style="left:1181px;top:508.00px;font-size:12px;line-height:17px;color:#6b6b6b;letter-spacing:-0.420px;word-spacing:0.420px;">NUUK, GreenLand</div>
<div class="t" style="left:1306px;top:508.00px;font-size:12px;line-height:17px;color:#6b6b6b;letter-spacing:-0.845px;word-spacing:0.845px;">EUR</div>
<div class="t" style="left:1431px;top:508.00px;font-size:12px;line-height:17px;color:#6b6b6b;letter-spacing:-0.667px;word-spacing:0.667px;">0</div>
<div class="t" style="left:1556px;top:508.00px;font-size:12px;line-height:17px;color:#2b2b2b;letter-spacing:-0.243px;word-spacing:0.243px;">0 kts</div>
<div class="t" style="left:1681px;top:508.00px;font-size:12px;line-height:17px;color:#2b2b2b;letter-spacing:-0.511px;word-spacing:0.511px;">0 °C</div>
<div style="position:absolute;left:804px;top:527px;width:123px;height:24px;background:#f7f7f7"></div>
<div style="position:absolute;left:929px;top:527px;width:123px;height:24px;background:#f7f7f7"></div>
<div style="position:absolute;left:1054px;top:527px;width:123px;height:24px;background:#f7f7f7"></div>
<div style="position:absolute;left:1179px;top:527px;width:123px;height:24px;background:#f7f7f7"></div>
<div style="position:absolute;left:1304px;top:527px;width:123px;height:24px;background:#f7f7f7"></div>
<div style="position:absolute;left:1429px;top:527px;width:123px;height:24px;background:#f7f7f7"></div>
<div style="position:absolute;left:1554px;top:527px;width:123px;height:24px;background:#f7f7f7"></div>
<div style="position:absolute;left:1679px;top:527px;width:108px;height:24px;background:#f7f7f7"></div>
<div style="position:absolute;left:777px;top:550px;width:20px;height:1px;background:#fff"></div>
<div style="position:absolute;left:807px;top:532px;width:14px;height:13px;background:#fff;border:1px solid #444"></div>
<svg style="left:807px;top:532px;" width="13" height="13" viewBox="0 0 13 13"><path d="M2.5 6.5 L5.2 9.5 L10.5 2.5" fill="none" stroke="#111" stroke-width="1.8"/></svg>
<div class="t" style="left:931px;top:532.00px;font-size:12px;line-height:17px;color:#6b6b6b;letter-spacing:-0.834px;word-spacing:0.834px;">BGKK</div>
<div class="t" style="left:1056px;top:532.00px;font-size:12px;line-height:17px;color:#6b6b6b;letter-spacing:-0.823px;word-spacing:0.823px;">KUS</div>
<div class="t" style="left:1181px;top:532.00px;font-size:12px;line-height:17px;color:#6b6b6b;letter-spacing:-0.479px;word-spacing:0.479px;">KULUSUK, GreenLand</div>
<div class="t" style="left:1306px;top:532.00px;font-size:12px;line-height:17px;color:#6b6b6b;letter-spacing:-0.845px;word-spacing:0.845px;">EUR</div>
<div class="t" style="left:1431px;top:532.00px;font-size:12px;line-height:17px;color:#6b6b6b;letter-spacing:-0.667px;word-spacing:0.667px;">0</div>
<div class="t" style="left:1556px;top:532.00px;font-size:12px;line-height:17px;color:#2b2b2b;letter-spacing:-0.243px;word-spacing:0.243px;">0 kts</div>
<div class="t" style="left:1681px;top:532.00px;font-size:12px;line-height:17px;color:#2b2b2b;letter-spacing:-0.511px;word-spacing:0.511px;">0 °C</div>
<div style="position:absolute;left:804px;top:551px;width:123px;height:24px;background:#e8e9ee"></div>
<div style="position:absolute;left:929px;top:551px;width:123px;height:24px;background:#e8e9ee"></div>
<div style="position:absolute;left:1054px;top:551px;width:123px;height:24px;background:#e8e9ee"></div>
<div style="position:absolute;left:1179px;top:551px;width:123px;height:24px;background:#e8e9ee"></div>
<div style="position:absolute;left:1304px;top:551px;width:123px;height:24px;background:#e8e9ee"></div>
<div style="position:absolute;left:1429px;top:551px;width:123px;height:24px;background:#e8e9ee"></div>
<div style="position:absolute;left:1554px;top:551px;width:123px;height:24px;background:#e8e9ee"></div>
<div style="position:absolute;left:1679px;top:551px;width:108px;height:24px;background:#e8e9ee"></div>
<div style="position:absolute;left:777px;top:574px;width:20px;height:1px;background:#fff"></div>
<div style="position:absolute;left:807px;top:556px;width:14px;height:13px;background:#fff;border:1px solid #444"></div>
<svg style="left:807px;top:556px;" width="13" height="13" viewBox="0 0 13 13"><path d="M2.5 6.5 L5.2 9.5 L10.5 2.5" fill="none" stroke="#111" stroke-width="1.8"/></svg>
<div class="t" style="left:931px;top:556.00px;font-size:12px;line-height:17px;color:#6b6b6b;letter-spacing:-0.883px;word-spacing:0.883px;">BGNO</div>
<div class="t" style="left:1056px;top:556.00px;font-size:12px;line-height:17px;color:#6b6b6b;letter-spacing:-0.622px;word-spacing:0.622px;">=QO</div>
<div class="t" style="left:1181px;top:556.00px;font-size:12px;line-height:17px;color:#6b6b6b;letter-spacing:-0.463px;word-spacing:0.463px;">STATION NORD,...</div>
<div class="t" style="left:1306px;top:556.00px;font-size:12px;line-height:17px;color:#6b6b6b;letter-spacing:-0.845px;word-spacing:0.845px;">EUR</div>
<div class="t" style="left:1431px;top:556.00px;font-size:12px;line-height:17px;color:#6b6b6b;letter-spacing:-0.833px;word-spacing:0.833px;">M2</div>
<div class="t" style="left:1556px;top:556.00px;font-size:12px;line-height:17px;color:#2b2b2b;letter-spacing:-0.243px;word-spacing:0.243px;">0 kts</div>
<div class="t" style="left:1681px;top:556.00px;font-size:12px;line-height:17px;color:#2b2b2b;letter-spacing:-0.511px;word-spacing:0.511px;">0 °C</div>
<div style="position:absolute;left:804px;top:575px;width:123px;height:24px;background:#f7f7f7"></div>
<div style="position:absolute;left:929px;top:575px;width:123px;height:24px;background:#f7f7f7"></div>
<div style="position:absolute;left:1054px;top:575px;width:123px;height:24px;background:#f7f7f7"></div>
<div style="position:absolute;left:1179px;top:575px;width:123px;height:24px;background:#f7f7f7"></div>
<div style="position:absolute;left:1304px;top:575px;width:123px;height:24px;background:#f7f7f7"></div>
<div style="position:absolute;left:1429px;top:575px;width:123px;height:24px;background:#f7f7f7"></div>
<div style="position:absolute;left:1554px;top:575px;width:123px;height:24px;background:#f7f7f7"></div>
<div style="position:absolute;left:1679px;top:575px;width:108px;height:24px;background:#f7f7f7"></div>
<div style="position:absolute;left:777px;top:598px;width:20px;height:1px;background:#fff"></div>
<div style="position:absolute;left:807px;top:580px;width:14px;height:13px;background:#fff;border:1px solid #444"></div>
<svg style="left:807px;top:580px;" width="13" height="13" viewBox="0 0 13 13"><path d="M2.5 6.5 L5.2 9.5 L10.5 2.5" fill="none" stroke="#111" stroke-width="1.8"/></svg>
<div class="t" style="left:931px;top:580.00px;font-size:12px;line-height:17px;color:#6b6b6b;letter-spacing:-0.817px;word-spacing:0.817px;">BGSF</div>
<div class="t" style="left:1056px;top:580.00px;font-size:12px;line-height:17px;color:#6b6b6b;letter-spacing:-0.711px;word-spacing:0.711px;">SFJ</div>
<div class="t" style="left:1181px;top:580.00px;font-size:12px;line-height:17px;color:#6b6b6b;letter-spacing:-0.570px;word-spacing:0.570px;">SONDRE...</div>
<div class="t" style="left:1306px;top:580.00px;font-size:12px;line-height:17px;color:#6b6b6b;letter-spacing:-0.845px;word-spacing:0.845px;">EUR</div>
<div class="t" style="left:1431px;top:580.00px;font-size:12px;line-height:17px;color:#6b6b6b;letter-spacing:-0.667px;word-spacing:0.667px;">4</div>
<div class="t" style="left:1556px;top:580.00px;font-size:12px;line-height:17px;color:#2b2b2b;letter-spacing:-0.243px;word-spacing:0.243px;">0 kts</div>
<div class="t" style="left:1681px;top:580.00px;font-size:12px;line-height:17px;color:#2b2b2b;letter-spacing:-0.511px;word-spacing:0.511px;">0 °C</div>
<div style="position:absolute;left:804px;top:599px;width:123px;height:24px;background:#e8e9ee"></div>
<div style="position:absolute;left:929px;top:599px;width:123px;height:24px;background:#e8e9ee"></div>
<div style="position:absolute;left:1054px;top:599px;width:123px;height:24px;background:#e8e9ee"></div>
<div style="position:absolute;left:1179px;top:599px;width:123px;height:24px;background:#e8e9ee"></div>
<div style="position:absolute;left:1304px;top:599px;width:123px;height:24px;background:#e8e9ee"></div>
<div style="position:absolute;left:1429px;top:599px;width:123px;height:24px;background:#e8e9ee"></div>
<div style="position:absolute;left:1554px;top:599px;width:123px;height:24px;background:#e8e9ee"></div>
<div style="position:absolute;left:1679px;top:599px;width:108px;height:24px;background:#e8e9ee"></div>
<div style="position:absolute;left:777px;top:622px;width:20px;height:1px;background:#fff"></div>
<div style="position:absolute;left:807px;top:604px;width:14px;height:13px;background:#fff;border:1px solid #444"></div>
<svg style="left:807px;top:604px;" width="13" height="13" viewBox="0 0 13 13"><path d="M2.5 6.5 L5.2 9.5 L10.5 2.5" fill="none" stroke="#111" stroke-width="1.8"/></svg>
<div class="t" style="left:931px;top:604.00px;font-size:12px;line-height:17px;color:#6b6b6b;letter-spacing:-0.784px;word-spacing:0.784px;">BGTL</div>
<div class="t" style="left:1056px;top:604.00px;font-size:12px;line-height:17px;color:#6b6b6b;letter-spacing:-0.822px;word-spacing:0.822px;">THU</div>
<div class="t" style="left:1181px;top:604.00px;font-size:12px;line-height:17px;color:#6b6b6b;letter-spacing:-0.433px;word-spacing:0.433px;">THULE AB, GreenLand</div>
<div class="t" style="left:1306px;top:604.00px;font-size:12px;line-height:17px;color:#6b6b6b;letter-spacing:-0.845px;word-spacing:0.845px;">EUR</div>
<div class="t" style="left:1431px;top:604.00px;font-size:12px;line-height:17px;color:#6b6b6b;letter-spacing:-0.833px;word-spacing:0.833px;">M3</div>
<div class="t" style="left:1556px;top:604.00px;font-size:12px;line-height:17px;color:#2b2b2b;letter-spacing:-0.243px;word-spacing:0.243px;">0 kts</div>
<div class="t" style="left:1681px;top:604.00px;font-size:12px;line-height:17px;color:#2b2b2b;letter-spacing:-0.511px;word-spacing:0.511px;">0 °C</div>
<div style="position:absolute;left:804px;top:623px;width:123px;height:24px;background:#f7f7f7"></div>
<div style="position:absolute;left:929px;top:623px;width:123px;height:24px;background:#f7f7f7"></div>
<div style="position:absolute;left:1054px;top:623px;width:123px;height:24px;background:#f7f7f7"></div>
<div style="position:absolute;left:1179px;top:623px;width:123px;height:24px;background:#f7f7f7"></div>
<div style="position:absolute;left:1304px;top:623px;width:123px;height:24px;background:#f7f7f7"></div>
<div style="position:absolute;left:1429px;top:623px;width:123px;height:24px;background:#f7f7f7"></div>
<div style="position:absolute;left:1554px;top:623px;width:123px;height:24px;background:#f7f7f7"></div>
<div style="position:absolute;left:1679px;top:623px;width:108px;height:24px;background:#f7f7f7"></div>
<div style="position:absolute;left:777px;top:646px;width:20px;height:1px;background:#fff"></div>
<div style="position:absolute;left:807px;top:628px;width:14px;height:13px;background:#fff;border:1px solid #444"></div>
<svg style="left:807px;top:628px;" width="13" height="13" viewBox="0 0 13 13"><path d="M2.5 6.5 L5.2 9.5 L10.5 2.5" fill="none" stroke="#111" stroke-width="1.8"/></svg>
<div class="t" style="left:931px;top:628.00px;font-size:12px;line-height:17px;color:#6b6b6b;letter-spacing:-0.700px;word-spacing:0.700px;">BIAR</div>
<div class="t" style="left:1056px;top:628.00px;font-size:12px;line-height:17px;color:#6b6b6b;letter-spacing:-0.800px;word-spacing:0.800px;">AEY</div>
<div class="t" style="left:1181px;top:628.00px;font-size:12px;line-height:17px;color:#6b6b6b;letter-spacing:-0.448px;word-spacing:0.448px;">AKUREYRI, Iceland</div>
<div class="t" style="left:1306px;top:628.00px;font-size:12px;line-height:17px;color:#6b6b6b;letter-spacing:-0.845px;word-spacing:0.845px;">EUR</div>
<div class="t" style="left:1431px;top:628.00px;font-size:12px;line-height:17px;color:#6b6b6b;letter-spacing:-0.667px;word-spacing:0.667px;">4</div>
<div class="t" style="left:1556px;top:628.00px;font-size:12px;line-height:17px;color:#2b2b2b;letter-spacing:-0.243px;word-spacing:0.243px;">0 kts</div>
<div class="t" style="left:1681px;top:628.00px;font-size:12px;line-height:17px;color:#2b2b2b;letter-spacing:-0.511px;word-spacing:0.511px;">0 °C</div>
<div style="position:absolute;left:804px;top:647px;width:123px;height:24px;background:#e8e9ee"></div>
<div style="position:absolute;left:929px;top:647px;width:123px;height:24px;background:#e8e9ee"></div>
<div style="position:absolute;left:1054px;top:647px;width:123px;height:24px;background:#e8e9ee"></div>
<div style="position:absolute;left:1179px;top:647px;width:123px;height:24px;background:#e8e9ee"></div>
<div style="position:absolute;left:1304px;top:647px;width:123px;height:24px;background:#e8e9ee"></div>
<div style="position:absolute;left:1429px;top:647px;width:123px;height:24px;background:#e8e9ee"></div>
<div style="position:absolute;left:1554px;top:647px;width:123px;height:24px;background:#e8e9ee"></div>
<div style="position:absolute;left:1679px;top:647px;width:108px;height:24px;background:#e8e9ee"></div>
<div style="position:absolute;left:777px;top:670px;width:20px;height:1px;background:#fff"></div>
<div style="position:absolute;left:807px;top:652px;width:14px;height:13px;background:#fff;border:1px solid #444"></div>
<svg style="left:807px;top:652px;" width="13" height="13" viewBox="0 0 13 13"><path d="M2.5 6.5 L5.2 9.5 L10.5 2.5" fill="none" stroke="#111" stroke-width="1.8"/></svg>
<div class="t" style="left:931px;top:652.00px;font-size:12px;line-height:17px;color:#6b6b6b;letter-spacing:-0.717px;word-spacing:0.717px;">BIEG</div>
<div class="t" style="left:1056px;top:652.00px;font-size:12px;line-height:17px;color:#6b6b6b;letter-spacing:-0.845px;word-spacing:0.845px;">EGS</div>
<div class="t" style="left:1181px;top:652.00px;font-size:12px;line-height:17px;color:#6b6b6b;letter-spacing:-0.426px;word-spacing:0.426px;">EGILSSTADIR, Iceland</div>
<div class="t" style="left:1306px;top:652.00px;font-size:12px;line-height:17px;color:#6b6b6b;letter-spacing:-0.845px;word-spacing:0.845px;">EUR</div>
<div class="t" style="left:1431px;top:652.00px;font-size:12px;line-height:17px;color:#6b6b6b;letter-spacing:-0.667px;word-spacing:0.667px;">5</div>
<div class="t" style="left:1556px;top:652.00px;font-size:12px;line-height:17px;color:#2b2b2b;letter-spacing:-0.243px;word-spacing:0.243px;">0 kts</div>
<div class="t" style="left:1681px;top:652.00px;font-size:12px;line-height:17px;color:#2b2b2b;letter-spacing:-0.511px;word-spacing:0.511px;">0 °C</div>
<div style="position:absolute;left:804px;top:671px;width:123px;height:24px;background:#f7f7f7"></div>
<div style="position:absolute;left:929px;top:671px;width:123px;height:24px;background:#f7f7f7"></div>
<div style="position:absolute;left:1054px;top:671px;width:123px;height:24px;background:#f7f7f7"></div>
<div style="position:absolute;left:1179px;top:671px;width:123px;height:24px;background:#f7f7f7"></div>
<div style="position:absolute;left:1304px;top:671px;width:123px;height:24px;background:#f7f7f7"></div>
<div style="position:absolute;left:1429px;top:671px;width:123px;height:24px;background:#f7f7f7"></div>
<div style="position:absolute;left:1554px;top:671px;width:123px;height:24px;background:#f7f7f7"></div>
<div style="position:absolute;left:1679px;top:671px;width:108px;height:24px;background:#f7f7f7"></div>
<div style="position:absolute;left:777px;top:694px;width:20px;height:1px;background:#fff"></div>
<div style="position:absolute;left:807px;top:676px;width:14px;height:13px;background:#fff;border:1px solid #444"></div>
<svg style="left:807px;top:676px;" width="13" height="13" viewBox="0 0 13 13"><path d="M2.5 6.5 L5.2 9.5 L10.5 2.5" fill="none" stroke="#111" stroke-width="1.8"/></svg>
<div class="t" style="left:931px;top:676.00px;font-size:12px;line-height:17px;color:#6b6b6b;letter-spacing:-0.667px;word-spacing:0.667px;">BIKF</div>
<div class="t" style="left:1056px;top:676.00px;font-size:12px;line-height:17px;color:#6b6b6b;letter-spacing:-0.778px;word-spacing:0.778px;">KEF</div>
<div class="t" style="left:1181px;top:676.00px;font-size:12px;line-height:17px;color:#6b6b6b;letter-spacing:-0.368px;word-spacing:0.368px;">KEFLAVIK, Iceland</div>
<div class="t" style="left:1306px;top:676.00px;font-size:12px;line-height:17px;color:#6b6b6b;letter-spacing:-0.845px;word-spacing:0.845px;">EUR</div>
<div class="t" style="left:1431px;top:676.00px;font-size:12px;line-height:17px;color:#6b6b6b;letter-spacing:-0.667px;word-spacing:0.667px;">6</div>
<div class="t" style="left:1556px;top:676.00px;font-size:12px;line-height:17px;color:#2b2b2b;letter-spacing:-0.243px;word-spacing:0.243px;">0 kts</div>
<div class="t" style="left:1681px;top:676.00px;font-size:12px;line-height:17px;color:#2b2b2b;letter-spacing:-0.511px;word-spacing:0.511px;">0 °C</div>
<div style="position:absolute;left:804px;top:695px;width:123px;height:24px;background:#e8e9ee"></div>
<div style="position:absolute;left:929px;top:695px;width:123px;height:24px;background:#e8e9ee"></div>
<div style="position:absolute;left:1054px;top:695px;width:123px;height:24px;background:#e8e9ee"></div>
<div style="position:absolute;left:1179px;top:695px;width:123px;height:24px;background:#e8e9ee"></div>
<div style="position:absolute;left:1304px;top:695px;width:123px;height:24px;background:#e8e9ee"></div>
<div style="position:absolute;left:1429px;top:695px;width:123px;height:24px;background:#e8e9ee"></div>
<div style="position:absolute;left:1554px;top:695px;width:123px;height:24px;background:#e8e9ee"></div>
<div style="position:absolute;left:1679px;top:695px;width:108px;height:24px;background:#e8e9ee"></div>
<div style="position:absolute;left:777px;top:718px;width:20px;height:1px;background:#fff"></div>
<div style="position:absolute;left:807px;top:700px;width:14px;height:13px;background:#fff;border:1px solid #444"></div>
<svg style="left:807px;top:700px;" width="13" height="13" viewBox="0 0 13 13"><path d="M2.5 6.5 L5.2 9.5 L10.5 2.5" fill="none" stroke="#111" stroke-width="1.8"/></svg>
<div class="t" style="left:931px;top:700.00px;font-size:12px;line-height:17px;color:#6b6b6b;letter-spacing:-0.700px;word-spacing:0.700px;">BIRK</div>
<div class="t" style="left:1056px;top:700.00px;font-size:12px;line-height:17px;color:#6b6b6b;letter-spacing:-0.823px;word-spacing:0.823px;">RKV</div>
<div class="t" style="left:1181px;top:700.00px;font-size:12px;line-height:17px;color:#6b6b6b;letter-spacing:-0.397px;word-spacing:0.397px;">REYKJAVIK, Iceland</div>
<div class="t" style="left:1306px;top:700.00px;font-size:12px;line-height:17px;color:#6b6b6b;letter-spacing:-0.845px;word-spacing:0.845px;">EUR</div>
<div class="t" style="left:1431px;top:700.00px;font-size:12px;line-height:17px;color:#6b6b6b;letter-spacing:-0.667px;word-spacing:0.667px;">5</div>
<div class="t" style="left:1556px;top:700.00px;font-size:12px;line-height:17px;color:#2b2b2b;letter-spacing:-0.243px;word-spacing:0.243px;">0 kts</div>
<div class="t" style="left:1681px;top:700.00px;font-size:12px;line-height:17px;color:#2b2b2b;letter-spacing:-0.511px;word-spacing:0.511px;">0 °C</div>
<div style="position:absolute;left:804px;top:719px;width:123px;height:24px;background:#f7f7f7"></div>
<div style="position:absolute;left:929px;top:719px;width:123px;height:24px;background:#f7f7f7"></div>
<div style="position:absolute;left:1054px;top:719px;width:123px;height:24px;background:#f7f7f7"></div>
<div style="position:absolute;left:1179px;top:719px;width:123px;height:24px;background:#f7f7f7"></div>
<div style="position:absolute;left:1304px;top:719px;width:123px;height:24px;background:#f7f7f7"></div>
<div style="position:absolute;left:1429px;top:719px;width:123px;height:24px;background:#f7f7f7"></div>
<div style="position:absolute;left:1554px;top:719px;width:123px;height:24px;background:#f7f7f7"></div>
<div style="position:absolute;left:1679px;top:719px;width:108px;height:24px;background:#f7f7f7"></div>
<div style="position:absolute;left:777px;top:742px;width:20px;height:1px;background:#fff"></div>
<div style="position:absolute;left:807px;top:724px;width:14px;height:13px;background:#fff;border:1px solid #444"></div>
<svg style="left:807px;top:724px;" width="13" height="13" viewBox="0 0 13 13"><path d="M2.5 6.5 L5.2 9.5 L10.5 2.5" fill="none" stroke="#111" stroke-width="1.8"/></svg>
<div class="t" style="left:931px;top:724.00px;font-size:12px;line-height:17px;color:#6b6b6b;letter-spacing:-0.644px;word-spacing:0.644px;">CYAM</div>
<div class="t" style="left:1056px;top:724.00px;font-size:12px;line-height:17px;color:#6b6b6b;letter-spacing:-0.570px;word-spacing:0.570px;">YAM</div>
<div class="t" style="left:1181px;top:724.00px;font-size:12px;line-height:17px;color:#6b6b6b;letter-spacing:-0.523px;word-spacing:0.523px;">SAULT STE MARIE,...</div>
<div class="t" style="left:1306px;top:724.00px;font-size:12px;line-height:17px;color:#6b6b6b;letter-spacing:-0.845px;word-spacing:0.845px;">CAN</div>
<div class="t" style="left:1431px;top:724.00px;font-size:12px;line-height:17px;color:#6b6b6b;letter-spacing:-0.667px;word-spacing:0.667px;">3</div>
<div class="t" style="left:1556px;top:724.00px;font-size:12px;line-height:17px;color:#2b2b2b;letter-spacing:-0.243px;word-spacing:0.243px;">0 kts</div>
<div class="t" style="left:1681px;top:724.00px;font-size:12px;line-height:17px;color:#2b2b2b;letter-spacing:-0.511px;word-spacing:0.511px;">0 °C</div>
<div style="position:absolute;left:804px;top:743px;width:123px;height:24px;background:#e8e9ee"></div>
<div style="position:absolute;left:929px;top:743px;width:123px;height:24px;background:#e8e9ee"></div>
<div style="position:absolute;left:1054px;top:743px;width:123px;height:24px;background:#e8e9ee"></div>
<div style="position:absolute;left:1179px;top:743px;width:123px;height:24px;background:#e8e9ee"></div>
<div style="position:absolute;left:1304px;top:743px;width:123px;height:24px;background:#e8e9ee"></div>
<div style="position:absolute;left:1429px;top:743px;width:123px;height:24px;background:#e8e9ee"></div>
<div style="position:absolute;left:1554px;top:743px;width:123px;height:24px;background:#e8e9ee"></div>
<div style="position:absolute;left:1679px;top:743px;width:108px;height:24px;background:#e8e9ee"></div>
<div style="position:absolute;left:777px;top:766px;width:20px;height:1px;background:#fff"></div>
<div style="position:absolute;left:807px;top:748px;width:14px;height:13px;background:#fff;border:1px solid #444"></div>
<svg style="left:807px;top:748px;" width="13" height="13" viewBox="0 0 13 13"><path d="M2.5 6.5 L5.2 9.5 L10.5 2.5" fill="none" stroke="#111" stroke-width="1.8"/></svg>
<div class="t" style="left:931px;top:748.00px;font-size:12px;line-height:17px;color:#6b6b6b;letter-spacing:-0.834px;word-spacing:0.834px;">CYBC</div>
<div class="t" style="left:1056px;top:748.00px;font-size:12px;line-height:17px;color:#6b6b6b;letter-spacing:-0.823px;word-spacing:0.823px;">YBC</div>
<div class="t" style="left:1181px;top:748.00px;font-size:12px;line-height:17px;color:#6b6b6b;letter-spacing:-0.533px;word-spacing:0.533px;">BAIE-COMEAU,...</div>
<div class="t" style="left:1306px;top:748.00px;font-size:12px;line-height:17px;color:#6b6b6b;letter-spacing:-0.845px;word-spacing:0.845px;">CAN</div>
<div class="t" style="left:1431px;top:748.00px;font-size:12px;line-height:17px;color:#6b6b6b;letter-spacing:-0.667px;word-spacing:0.667px;">1</div>
<div class="t" style="left:1556px;top:748.00px;font-size:12px;line-height:17px;color:#2b2b2b;letter-spacing:-0.243px;word-spacing:0.243px;">0 kts</div>
<div class="t" style="left:1681px;top:748.00px;font-size:12px;line-height:17px;color:#2b2b2b;letter-spacing:-0.511px;word-spacing:0.511px;">0 °C</div>
<div style="position:absolute;left:804px;top:767px;width:123px;height:24px;background:#f7f7f7"></div>
<div style="position:absolute;left:929px;top:767px;width:123px;height:24px;background:#f7f7f7"></div>
<div style="position:absolute;left:1054px;top:767px;width:123px;height:24px;background:#f7f7f7"></div>
<div style="position:absolute;left:1179px;top:767px;width:123px;height:24px;background:#f7f7f7"></div>
<div style="position:absolute;left:1304px;top:767px;width:123px;height:24px;background:#f7f7f7"></div>
<div style="position:absolute;left:1429px;top:767px;width:123px;height:24px;background:#f7f7f7"></div>
<div style="position:absolute;left:1554px;top:767px;width:123px;height:24px;background:#f7f7f7"></div>
<div style="position:absolute;left:1679px;top:767px;width:108px;height:24px;background:#f7f7f7"></div>
<div style="position:absolute;left:777px;top:790px;width:20px;height:1px;background:#fff"></div>
<div style="position:absolute;left:807px;top:772px;width:14px;height:13px;background:#fff;border:1px solid #444"></div>
<svg style="left:807px;top:772px;" width="13" height="13" viewBox="0 0 13 13"><path d="M2.5 6.5 L5.2 9.5 L10.5 2.5" fill="none" stroke="#111" stroke-width="1.8"/></svg>
<div class="t" style="left:931px;top:772.00px;font-size:12px;line-height:17px;color:#6b6b6b;letter-spacing:-0.850px;word-spacing:0.850px;">CYBG</div>
<div class="t" style="left:1056px;top:772.00px;font-size:12px;line-height:17px;color:#6b6b6b;letter-spacing:-0.845px;word-spacing:0.845px;">YBG</div>
<div class="t" style="left:1181px;top:772.00px;font-size:12px;line-height:17px;color:#6b6b6b;letter-spacing:-0.530px;word-spacing:0.530px;">BAGOTVILLE, Canada</div>
<div class="t" style="left:1306px;top:772.00px;font-size:12px;line-height:17px;color:#6b6b6b;letter-spacing:-0.845px;word-spacing:0.845px;">CAN</div>
<div class="t" style="left:1431px;top:772.00px;font-size:12px;line-height:17px;color:#6b6b6b;letter-spacing:-0.833px;word-spacing:0.833px;">M5</div>
<div class="t" style="left:1556px;top:772.00px;font-size:12px;line-height:17px;color:#2b2b2b;letter-spacing:-0.243px;word-spacing:0.243px;">0 kts</div>
<div class="t" style="left:1681px;top:772.00px;font-size:12px;line-height:17px;color:#2b2b2b;letter-spacing:-0.511px;word-spacing:0.511px;">0 °C</div>
<div style="position:absolute;left:804px;top:791px;width:123px;height:24px;background:#e8e9ee"></div>
<div style="position:absolute;left:929px;top:791px;width:123px;height:24px;background:#e8e9ee"></div>
<div style="position:absolute;left:1054px;top:791px;width:123px;height:24px;background:#e8e9ee"></div>
<div style="position:absolute;left:1179px;top:791px;width:123px;height:24px;background:#e8e9ee"></div>
<div style="position:absolute;left:1304px;top:791px;width:123px;height:24px;background:#e8e9ee"></div>
<div style="position:absolute;left:1429px;top:791px;width:123px;height:24px;background:#e8e9ee"></div>
<div style="position:absolute;left:1554px;top:791px;width:123px;height:24px;background:#e8e9ee"></div>
<div style="position:absolute;left:1679px;top:791px;width:108px;height:24px;background:#e8e9ee"></div>
<div style="position:absolute;left:777px;top:814px;width:20px;height:1px;background:#fff"></div>
<div style="position:absolute;left:807px;top:796px;width:14px;height:13px;background:#fff;border:1px solid #444"></div>
<svg style="left:807px;top:796px;" width="13" height="13" viewBox="0 0 13 13"><path d="M2.5 6.5 L5.2 9.5 L10.5 2.5" fill="none" stroke="#111" stroke-width="1.8"/></svg>
<div class="t" style="left:931px;top:796.00px;font-size:12px;line-height:17px;color:#6b6b6b;letter-spacing:-0.834px;word-spacing:0.834px;">CYBR</div>
<div class="t" style="left:1056px;top:796.00px;font-size:12px;line-height:17px;color:#6b6b6b;letter-spacing:-0.823px;word-spacing:0.823px;">YBR</div>
<div class="t" style="left:1181px;top:796.00px;font-size:12px;line-height:17px;color:#6b6b6b;letter-spacing:-0.538px;word-spacing:0.538px;">BRANDON, Canada</div>
<div class="t" style="left:1306px;top:796.00px;font-size:12px;line-height:17px;color:#6b6b6b;letter-spacing:-0.845px;word-spacing:0.845px;">CAN</div>
<div class="t" style="left:1431px;top:796.00px;font-size:12px;line-height:17px;color:#6b6b6b;letter-spacing:-0.667px;word-spacing:0.667px;">1</div>
<div class="t" style="left:1556px;top:796.00px;font-size:12px;line-height:17px;color:#2b2b2b;letter-spacing:-0.243px;word-spacing:0.243px;">0 kts</div>
<div class="t" style="left:1681px;top:796.00px;font-size:12px;line-height:17px;color:#2b2b2b;letter-spacing:-0.511px;word-spacing:0.511px;">0 °C</div>
<div style="position:absolute;left:804px;top:815px;width:123px;height:24px;background:#f7f7f7"></div>
<div style="position:absolute;left:929px;top:815px;width:123px;height:24px;background:#f7f7f7"></div>
<div style="position:absolute;left:1054px;top:815px;width:123px;height:24px;background:#f7f7f7"></div>
<div style="position:absolute;left:1179px;top:815px;width:123px;height:24px;background:#f7f7f7"></div>
<div style="position:absolute;left:1304px;top:815px;width:123px;height:24px;background:#f7f7f7"></div>
<div style="position:absolute;left:1429px;top:815px;width:123px;height:24px;background:#f7f7f7"></div>
<div style="position:absolute;left:1554px;top:815px;width:123px;height:24px;background:#f7f7f7"></div>
<div style="position:absolute;left:1679px;top:815px;width:108px;height:24px;background:#f7f7f7"></div>
<div style="position:absolute;left:777px;top:838px;width:20px;height:1px;background:#fff"></div>
<div style="position:absolute;left:807px;top:820px;width:14px;height:13px;background:#fff;border:1px solid #444"></div>
<svg style="left:807px;top:820px;" width="13" height="13" viewBox="0 0 13 13"><path d="M2.5 6.5 L5.2 9.5 L10.5 2.5" fill="none" stroke="#111" stroke-width="1.8"/></svg>
<div class="t" style="left:931px;top:820.00px;font-size:12px;line-height:17px;color:#6b6b6b;letter-spacing:-0.834px;word-spacing:0.834px;">CYCB</div>
<div class="t" style="left:1056px;top:820.00px;font-size:12px;line-height:17px;color:#6b6b6b;letter-spacing:-0.823px;word-spacing:0.823px;">YCB</div>
<div class="t" style="left:1181px;top:820.00px;font-size:12px;line-height:17px;color:#6b6b6b;letter-spacing:-0.452px;word-spacing:0.452px;">CAMBRIDGE BAY,...</div>
<div class="t" style="left:1306px;top:820.00px;font-size:12px;line-height:17px;color:#6b6b6b;letter-spacing:-0.845px;word-spacing:0.845px;">CAN</div>
<div class="t" style="left:1431px;top:820.00px;font-size:12px;line-height:17px;color:#6b6b6b;letter-spacing:-0.667px;word-spacing:0.667px;">1</div>
<div class="t" style="left:1556px;top:820.00px;font-size:12px;line-height:17px;color:#2b2b2b;letter-spacing:-0.243px;word-spacing:0.243px;">0 kts</div>
<div class="t" style="left:1681px;top:820.00px;font-size:12px;line-height:17px;color:#2b2b2b;letter-spacing:-0.511px;word-spacing:0.511px;">0 °C</div>
<div style="position:absolute;left:804px;top:839px;width:123px;height:24px;background:#e8e9ee"></div>
<div style="position:absolute;left:929px;top:839px;width:123px;height:24px;background:#e8e9ee"></div>
<div style="position:absolute;left:1054px;top:839px;width:123px;height:24px;background:#e8e9ee"></div>
<div style="position:absolute;left:1179px;top:839px;width:123px;height:24px;background:#e8e9ee"></div>
<div style="position:absolute;left:1304px;top:839px;width:123px;height:24px;background:#e8e9ee"></div>
<div style="position:absolute;left:1429px;top:839px;width:123px;height:24px;background:#e8e9ee"></div>
<div style="position:absolute;left:1554px;top:839px;width:123px;height:24px;background:#e8e9ee"></div>
<div style="position:absolute;left:1679px;top:839px;width:108px;height:24px;background:#e8e9ee"></div>
<div style="position:absolute;left:777px;top:862px;width:20px;height:1px;background:#fff"></div>
<div style="position:absolute;left:807px;top:844px;width:14px;height:13px;background:#fff;border:1px solid #444"></div>
<svg style="left:807px;top:844px;" width="13" height="13" viewBox="0 0 13 13"><path d="M2.5 6.5 L5.2 9.5 L10.5 2.5" fill="none" stroke="#111" stroke-width="1.8"/></svg>
<div class="t" style="left:931px;top:844.00px;font-size:12px;line-height:17px;color:#6b6b6b;letter-spacing:-0.850px;word-spacing:0.850px;">CYCH</div>
<div class="t" style="left:1056px;top:844.00px;font-size:12px;line-height:17px;color:#6b6b6b;letter-spacing:-0.845px;word-spacing:0.845px;">YCH</div>
<div class="t" style="left:1181px;top:844.00px;font-size:12px;line-height:17px;color:#6b6b6b;letter-spacing:-0.496px;word-spacing:0.496px;">MIRAMICHI, Canada</div>
<div class="t" style="left:1306px;top:844.00px;font-size:12px;line-height:17px;color:#6b6b6b;letter-spacing:-0.845px;word-spacing:0.845px;">CAN</div>
<div class="t" style="left:1431px;top:844.00px;font-size:12px;line-height:17px;color:#6b6b6b;letter-spacing:-0.667px;word-spacing:0.667px;">2</div>
<div class="t" style="left:1556px;top:844.00px;font-size:12px;line-height:17px;color:#2b2b2b;letter-spacing:-0.243px;word-spacing:0.243px;">0 kts</div>
<div class="t" style="left:1681px;top:844.00px;font-size:12px;line-height:17px;color:#2b2b2b;letter-spacing:-0.511px;word-spacing:0.511px;">0 °C</div>
<div style="position:absolute;left:804px;top:863px;width:123px;height:24px;background:#f7f7f7"></div>
<div style="position:absolute;left:929px;top:863px;width:123px;height:24px;background:#f7f7f7"></div>
<div style="position:absolute;left:1054px;top:863px;width:123px;height:24px;background:#f7f7f7"></div>
<div style="position:absolute;left:1179px;top:863px;width:123px;height:24px;background:#f7f7f7"></div>
<div style="position:absolute;left:1304px;top:863px;width:123px;height:24px;background:#f7f7f7"></div>
<div style="position:absolute;left:1429px;top:863px;width:123px;height:24px;background:#f7f7f7"></div>
<div style="position:absolute;left:1554px;top:863px;width:123px;height:24px;background:#f7f7f7"></div>
<div style="position:absolute;left:1679px;top:863px;width:108px;height:24px;background:#f7f7f7"></div>
<div style="position:absolute;left:777px;top:886px;width:20px;height:1px;background:#fff"></div>
<div style="position:absolute;left:807px;top:868px;width:14px;height:13px;background:#fff;border:1px solid #444"></div>
<svg style="left:807px;top:868px;" width="13" height="13" viewBox="0 0 13 13"><path d="M2.5 6.5 L5.2 9.5 L10.5 2.5" fill="none" stroke="#111" stroke-width="1.8"/></svg>
<div class="t" style="left:931px;top:868.00px;font-size:12px;line-height:17px;color:#6b6b6b;letter-spacing:-0.800px;word-spacing:0.800px;">CYCL</div>
<div class="t" style="left:1056px;top:868.00px;font-size:12px;line-height:17px;color:#6b6b6b;letter-spacing:-0.778px;word-spacing:0.778px;">YCL</div>
<div class="t" style="left:1181px;top:868.00px;font-size:12px;line-height:17px;color:#6b6b6b;letter-spacing:-0.503px;word-spacing:0.503px;">CHARLO, Canada</div>
<div class="t" style="left:1306px;top:868.00px;font-size:12px;line-height:17px;color:#6b6b6b;letter-spacing:-0.845px;word-spacing:0.845px;">CAN</div>
<div class="t" style="left:1431px;top:868.00px;font-size:12px;line-height:17px;color:#6b6b6b;letter-spacing:-0.667px;word-spacing:0.667px;">1</div>
<div class="t" style="left:1556px;top:868.00px;font-size:12px;line-height:17px;color:#2b2b2b;letter-spacing:-0.243px;word-spacing:0.243px;">0 kts</div>
<div class="t" style="left:1681px;top:868.00px;font-size:12px;line-height:17px;color:#2b2b2b;letter-spacing:-0.511px;word-spacing:0.511px;">0 °C</div>
<div style="position:absolute;left:804px;top:887px;width:123px;height:24px;background:#e8e9ee"></div>
<div style="position:absolute;left:929px;top:887px;width:123px;height:24px;background:#e8e9ee"></div>
<div style="position:absolute;left:1054px;top:887px;width:123px;height:24px;background:#e8e9ee"></div>
<div style="position:absolute;left:1179px;top:887px;width:123px;height:24px;background:#e8e9ee"></div>
<div style="position:absolute;left:1304px;top:887px;width:123px;height:24px;background:#e8e9ee"></div>
<div style="position:absolute;left:1429px;top:887px;width:123px;height:24px;background:#e8e9ee"></div>
<div style="position:absolute;left:1554px;top:887px;width:123px;height:24px;background:#e8e9ee"></div>
<div style="position:absolute;left:1679px;top:887px;width:108px;height:24px;background:#e8e9ee"></div>
<div style="position:absolute;left:777px;top:910px;width:20px;height:1px;background:#fff"></div>
<div style="position:absolute;left:807px;top:892px;width:14px;height:13px;background:#fff;border:1px solid #444"></div>
<svg style="left:807px;top:892px;" width="13" height="13" viewBox="0 0 13 13"><path d="M2.5 6.5 L5.2 9.5 L10.5 2.5" fill="none" stroke="#111" stroke-width="1.8"/></svg>
<div class="t" style="left:931px;top:892.00px;font-size:12px;line-height:17px;color:#6b6b6b;letter-spacing:-0.817px;word-spacing:0.817px;">CYDF</div>
<div class="t" style="left:1056px;top:892.00px;font-size:12px;line-height:17px;color:#6b6b6b;letter-spacing:-0.800px;word-spacing:0.800px;">YDF</div>
<div class="t" style="left:1181px;top:892.00px;font-size:12px;line-height:17px;color:#6b6b6b;letter-spacing:-0.530px;word-spacing:0.530px;">DEERLAKE(NFLD),...</div>
<div class="t" style="left:1306px;top:892.00px;font-size:12px;line-height:17px;color:#6b6b6b;letter-spacing:-0.845px;word-spacing:0.845px;">CAN</div>
<div class="t" style="left:1431px;top:892.00px;font-size:12px;line-height:17px;color:#6b6b6b;letter-spacing:-0.667px;word-spacing:0.667px;">3</div>
<div class="t" style="left:1556px;top:892.00px;font-size:12px;line-height:17px;color:#2b2b2b;letter-spacing:-0.243px;word-spacing:0.243px;">0 kts</div>
<div class="t" style="left:1681px;top:892.00px;font-size:12px;line-height:17px;color:#2b2b2b;letter-spacing:-0.511px;word-spacing:0.511px;">0 °C</div>
<div style="position:absolute;left:804px;top:911px;width:123px;height:20px;background:#f7f7f7"></div>
<div style="position:absolute;left:929px;top:911px;width:123px;height:20px;background:#f7f7f7"></div>
<div style="position:absolute;left:1054px;top:911px;width:123px;height:20px;background:#f7f7f7"></div>
<div style="position:absolute;left:1179px;top:911px;width:123px;height:20px;background:#f7f7f7"></div>
<div style="position:absolute;left:1304px;top:911px;width:123px;height:20px;background:#f7f7f7"></div>
<div style="position:absolute;left:1429px;top:911px;width:123px;height:20px;background:#f7f7f7"></div>
<div style="position:absolute;left:1554px;top:911px;width:123px;height:20px;background:#f7f7f7"></div>
<div style="position:absolute;left:1679px;top:911px;width:108px;height:20px;background:#f7f7f7"></div>
<div style="position:absolute;left:777px;top:934px;width:20px;height:1px;background:#fff"></div>
<div style="position:absolute;left:807px;top:916px;width:14px;height:13px;background:#fff;border:1px solid #444"></div>
<svg style="left:807px;top:916px;" width="13" height="13" viewBox="0 0 13 13"><path d="M2.5 6.5 L5.2 9.5 L10.5 2.5" fill="none" stroke="#111" stroke-width="1.8"/></svg>
<div class="t" style="left:931px;top:916.00px;font-size:12px;line-height:17px;color:#6b6b6b;letter-spacing:-0.834px;word-spacing:0.834px;">CYDP</div>
<div class="t" style="left:1056px;top:916.00px;font-size:12px;line-height:17px;color:#6b6b6b;letter-spacing:-0.823px;word-spacing:0.823px;">YDP</div>
<div class="t" style="left:1181px;top:916.00px;font-size:12px;line-height:17px;color:#6b6b6b;letter-spacing:-0.400px;word-spacing:0.400px;">NAIN, Canada</div>
<div class="t" style="left:1306px;top:916.00px;font-size:12px;line-height:17px;color:#6b6b6b;letter-spacing:-0.845px;word-spacing:0.845px;">CAN</div>
<div class="t" style="left:1431px;top:916.00px;font-size:12px;line-height:17px;color:#6b6b6b;letter-spacing:-0.667px;word-spacing:0.667px;">0</div>
<div class="t" style="left:1556px;top:916.00px;font-size:12px;line-height:17px;color:#2b2b2b;letter-spacing:-0.243px;word-spacing:0.243px;">0 kts</div>
<div class="t" style="left:1681px;top:916.00px;font-size:12px;line-height:17px;color:#2b2b2b;letter-spacing:-0.511px;word-spacing:0.511px;">0 °C</div>
<svg style="left:784px;top:291px;" width="6" height="10" viewBox="0 0 6 10"><path d="M0 0L7 5L0 10Z" fill="#fff"/></svg>
<div style="position:absolute;left:776px;top:931px;width:1030px;height:1px;background:#4f86c6"></div>
<div style="position:absolute;left:1787px;top:242px;width:18px;height:689px;background:#f0f0f0"></div>
<svg style="left:1792px;top:250px;" width="9" height="5" viewBox="0 0 9 5"><path d="M0.5 4.5L4.5 0.5L8.5 4.5" fill="none" stroke="#a0a0a0" stroke-width="1"/></svg>
<div style="position:absolute;left:1788px;top:259px;width:17px;height:8px;background:#cdcdcd"></div>
<svg style="left:1792px;top:920px;" width="9" height="5" viewBox="0 0 9 5"><path d="M0.5 0.5L4.5 4.5L8.5 0.5" fill="none" stroke="#a0a0a0" stroke-width="1"/></svg>
<div style="position:absolute;left:1201px;top:937px;width:80px;height:20px;background:#e1e1e1;border:1px solid #adadad"></div>
<div class="t" style="left:1201.0px;width:80px;text-align:center;top:940.00px;font-size:12px;line-height:17px;color:#111;letter-spacing:-0.158px;word-spacing:0.158px;">Import</div>
<div style="position:absolute;left:1291px;top:937px;width:80px;height:20px;background:#e1e1e1;border:1px solid #adadad"></div>
<div class="t" style="left:1291.0px;width:80px;text-align:center;top:940.00px;font-size:12px;line-height:17px;color:#111;letter-spacing:-0.222px;word-spacing:0.222px;">Export</div>
<div style="position:absolute;left:1381px;top:937px;width:100px;height:20px;background:#e1e1e1;border:1px solid #adadad"></div>
<div class="t" style="left:1381.0px;width:100px;text-align:center;top:940.00px;font-size:12px;line-height:17px;color:#111;letter-spacing:-0.145px;word-spacing:0.145px;">Select filtered</div>
<div style="position:absolute;left:1491px;top:937px;width:100px;height:20px;background:#e1e1e1;border:1px solid #adadad"></div>
<div class="t" style="left:1491.0px;width:100px;text-align:center;top:940.00px;font-size:12px;line-height:17px;color:#111;letter-spacing:-0.147px;word-spacing:0.147px;">Deselect filtered</div>
<div style="position:absolute;left:1631px;top:937px;width:80px;height:20px;background:#e1e1e1;border:1px solid #adadad"></div>
<div class="t" style="left:1631.0px;width:80px;text-align:center;top:940.00px;font-size:12px;line-height:17px;color:#111;letter-spacing:-0.527px;word-spacing:0.527px;">Ok</div>
<div style="position:absolute;left:1721px;top:937px;width:80px;height:20px;background:#e1e1e1;border:1px solid #adadad"></div>
<div class="t" style="left:1721.0px;width:80px;text-align:center;top:940.00px;font-size:12px;line-height:17px;color:#111;letter-spacing:-0.240px;word-spacing:0.240px;">Cancel</div></body></html>
